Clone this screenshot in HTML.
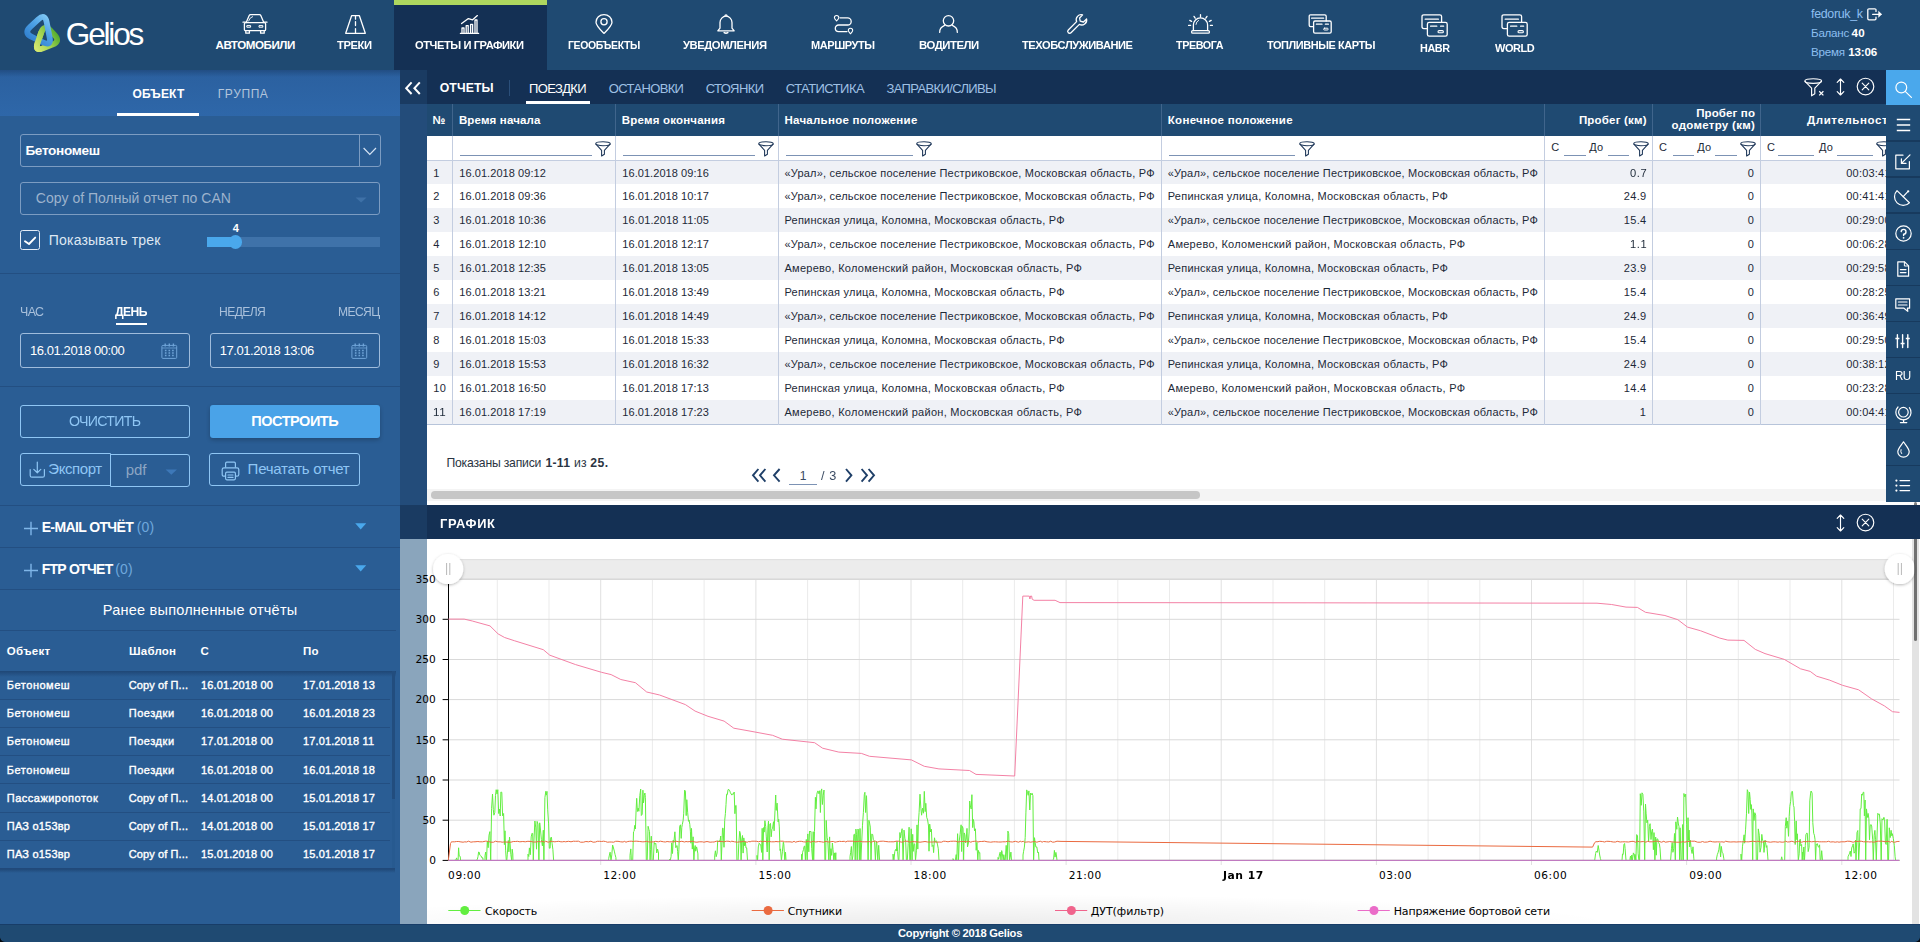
<!DOCTYPE html>
<html lang="ru">
<head>
<meta charset="utf-8">
<title>Gelios</title>
<style>
*{box-sizing:border-box;margin:0;padding:0}
html,body{width:1920px;height:942px;overflow:hidden;background:#1f4a72;font-family:"Liberation Sans",sans-serif;color:#fff}
body{position:relative}
.abs{position:absolute}
svg{display:block;overflow:visible}
.ic{fill:none;stroke:#fff;stroke-width:1.3;stroke-linecap:round;stroke-linejoin:round}
</style>
</head>
<body>
<!-- backgrounds -->
<div class="abs" style="left:0px;top:0px;width:1920px;height:70px;background:#1f4a72;"></div>
<div class="abs" style="left:394px;top:0px;width:153px;height:70px;background:#143054;border-top:5px solid #aed75f;"></div>
<div class="abs" style="left:0px;top:70px;width:400px;height:854px;background:#2a5d94;"></div>
<div class="abs" style="left:400px;top:70px;width:1486px;height:34.2px;background:#143054;"></div>
<div class="abs" style="left:400px;top:104px;width:27px;height:401px;background:#234c7a;"></div>
<div class="abs" style="left:427px;top:104px;width:1459px;height:401px;background:#fff;"></div>
<div class="abs" style="left:1886px;top:501.5px;width:34px;height:4px;background:#fff;"></div>
<div class="abs" style="left:400px;top:538.8px;width:27px;height:385.2px;background:#8aa5bc;"></div>
<!-- header -->
<svg class="abs" style="left:0;top:0" width="160" height="70" viewBox="0 0 160 70"><defs><linearGradient id="lgb" gradientUnits="userSpaceOnUse" x1="27" y1="42" x2="50" y2="16"><stop offset="0" stop-color="#2b7acb"/><stop offset=".55" stop-color="#4ea2e6"/><stop offset="1" stop-color="#86cdf6"/></linearGradient><linearGradient id="lgg" gradientUnits="userSpaceOnUse" x1="36" y1="48" x2="58" y2="34"><stop offset="0" stop-color="#d3e86e"/><stop offset=".5" stop-color="#9fd251"/><stop offset="1" stop-color="#52aa2e"/></linearGradient><clipPath id="cpg"><path d="M28 31 L45 31 L42 51 L46 56 L28 58 Z"/></clipPath></defs><path d="M41.24 32.50 L37.56 43.10 Q34.60 51.60 42.99 48.33 L52.41 44.67 Q60.80 41.40 54.59 34.89 L50.41 30.51 Q44.20 24.00 41.24 32.50 Z" fill="none" stroke="url(#lgg)" stroke-width="5.8"/><path d="M38.31 19.33 L30.19 26.87 Q23.60 33.00 31.71 36.91 L43.29 42.49 Q51.40 46.40 49.67 37.57 L46.63 22.03 Q44.90 13.20 38.31 19.33 Z" fill="none" stroke="url(#lgb)" stroke-width="5.8"/><path d="M41.24 32.50 L37.56 43.10 Q34.60 51.60 42.99 48.33 L52.41 44.67 Q60.80 41.40 54.59 34.89 L50.41 30.51 Q44.20 24.00 41.24 32.50 Z" fill="none" stroke="url(#lgg)" stroke-width="5.8" clip-path="url(#cpg)"/><text x="65.8" y="44.7" font-family="Liberation Sans, sans-serif" font-size="31.6" fill="#fff" letter-spacing="-2.2">Gelios</text></svg>

  <!-- car -->
  <svg class="abs" style="left:242px;top:14px" width="26" height="20" viewBox="0 0 26 20"><g class="ic">
    <path d="M4.2 8.6 L7.2 1.6 Q7.6 .7 8.6 .7 H17.4 Q18.4 .7 18.8 1.6 L21.8 8.6"/>
    <path d="M1 8.2 H3.6 M22.4 8.2 H25"/>
    <rect x="2.4" y="8.6" width="21.2" height="8" rx="1.2"/>
    <rect x="5.2" y="11.6" width="3.4" height="1.6" stroke-width="1"/><rect x="17.4" y="11.6" width="3.4" height="1.6" stroke-width="1"/>
    <path d="M3.8 16.6 V19.2 H7.4 V16.6 M18.6 16.6 V19.2 H22.2 V16.6"/>
    <path d="M6.6 7 Q7.8 3.2 10.6 2.6" stroke-width=".9"/>
  </g></svg>
  <!-- road -->
  <svg class="abs" style="left:345px;top:15px" width="21" height="19" viewBox="0 0 21 19"><g class="ic">
    <path d="M6.6 .7 H14.4 L20.3 18.3 H.7 Z"/>
    <path d="M10.5 1 V4.2 M10.5 6.6 V10.6 M10.5 13.6 V18"/>
  </g></svg>
  <!-- chart -->
  <svg class="abs" style="left:460px;top:15px" width="19" height="19" viewBox="0 0 19 19"><g class="ic" stroke-width="1.2">
    <path d="M.4 18.4 H18.6"/>
    <path d="M2 18 V13 H4 V18 M6.2 18 V10.6 H8.2 V18 M10.6 18 V9.4 H12.6 V18 M15 18 V5 H17 V18"/>
    <path d="M1.6 8.6 L8.4 3.6 L12.6 4.8 L17.4 .6"/>
  </g></svg>
  <!-- pin -->
  <svg class="abs" style="left:595px;top:14px" width="18" height="20" viewBox="0 0 18 20"><g class="ic">
    <path d="M9 19.4 C6 16.4 1 11.6 1 8.2 A8 7.6 0 0 1 17 8.2 C17 11.6 12 16.4 9 19.4 Z"/>
    <circle cx="9" cy="7.8" r="3.1"/>
  </g></svg>
  <!-- bell -->
  <svg class="abs" style="left:717px;top:14px" width="18" height="20" viewBox="0 0 18 20"><g class="ic">
    <path d="M.8 16.8 H17.2 L15 14.2 V8.6 A6 6.4 0 0 0 3 8.6 V14.2 Z"/>
    <path d="M8 1.8 A1 1 0 0 1 10 1.8"/>
    <path d="M7.2 18.6 Q9 19.8 10.8 18.6" stroke-width="1.6"/>
  </g></svg>
  <!-- routes -->
  <svg class="abs" style="left:834px;top:15px" width="19" height="19" viewBox="0 0 19 19"><g class="ic">
    <path d="M6 2.8 H13.6 A3.6 3.6 0 0 1 13.6 10 H4.6 A3.3 3.3 0 0 0 4.6 16.6 H13"/>
    <path d="M2.6 6 C1.1 4.4 .4 3.5 .4 2.7 A2.2 2.2 0 0 1 4.8 2.7 C4.8 3.5 4.1 4.4 2.6 6 Z" stroke-width="1.05"/>
    <path d="M16.5 18.8 C15 17.2 14.3 16.3 14.3 15.5 A2.2 2.2 0 0 1 18.7 15.5 C18.7 16.3 18 17.2 16.5 18.8 Z" stroke-width="1.05"/>
  </g></svg>
  <!-- driver -->
  <svg class="abs" style="left:939px;top:15px" width="19" height="18" viewBox="0 0 19 18"><g class="ic">
    <circle cx="9.5" cy="5.8" r="5.2"/>
    <path d="M.7 17.4 A9.2 7.6 0 0 1 5.6 10.4 M13.4 10.4 A9.2 7.6 0 0 1 18.3 17.4"/>
  </g></svg>
  <!-- wrench -->
  <svg class="abs" style="left:1067px;top:14px" width="21" height="20" viewBox="0 0 21 20"><g class="ic">
    <path d="M15.6 .9 A5 5 0 0 0 9.6 7.6 L1.3 16 A1.9 1.9 0 0 0 4 18.7 L12.4 10.4 A5 5 0 0 0 19.6 5 L16.4 8 L13.2 7.2 L12.6 4 Z"/>
  </g></svg>
  <!-- alarm -->
  <svg class="abs" style="left:1188px;top:14px" width="25" height="20" viewBox="0 0 25 20"><g class="ic">
    <path d="M5.4 16.6 V11 A7.1 7.1 0 0 1 19.6 11 V16.6"/>
    <rect x="3.6" y="16.6" width="17.8" height="2.6" rx="1.2"/>
    <path d="M8 10.4 A4.6 4.6 0 0 1 10.6 6.4" stroke-width=".9"/>
    <path d="M12.5 .6 V3 M6 2.4 L7.2 4.2 M19 2.4 L17.8 4.2 M1.8 6.4 L3.6 7.4 M23.2 6.4 L21.4 7.4 M.6 11.4 H2.6 M22.4 11.4 H24.4"/>
  </g></svg>
  <!-- cards -->
  <svg class="abs" style="left:1308px;top:14px" width="24" height="20" viewBox="0 0 24 20"><g class="ic">
    <path d="M5.4 12.6 H2.6 Q1.2 12.6 1.2 11.2 V2.2 Q1.2 .8 2.6 .8 H16.8 Q18.2 .8 18.2 2.2 V7"/>
    <rect x="5.6" y="7" width="17.6" height="12.2" rx="1.4"/>
    <path d="M3.6 4.2 H15.6 M8.4 10.2 H14 M17.4 10.2 H20.4"/>
    <rect x="15.6" y="14.2" width="4.6" height="1.8" rx=".9" stroke-width="1"/>
  </g></svg>
  <svg class="abs" style="left:1421px;top:14px" width="27" height="23" viewBox="0 0 27 23"><g class="ic" stroke-width="1.4">
    <path d="M6 14.6 H2.8 Q1 14.6 1 12.8 V2.6 Q1 .8 2.8 .8 H18.8 Q20.6 .8 20.6 2.6 V8.4"/>
    <rect x="6.4" y="8.4" width="19.8" height="13.8" rx="1.8"/>
    <path d="M4.2 5.2 H17.4 M9.6 12.2 H15.8 M19.6 12.2 H22.6"/>
    <rect x="17" y="16.6" width="5.4" height="2.2" rx="1.1" stroke-width="1.1"/>
  </g></svg>
  <svg class="abs" style="left:1501px;top:14px" width="27" height="23" viewBox="0 0 27 23"><g class="ic" stroke-width="1.4">
    <path d="M6 14.6 H2.8 Q1 14.6 1 12.8 V2.6 Q1 .8 2.8 .8 H18.8 Q20.6 .8 20.6 2.6 V8.4"/>
    <rect x="6.4" y="8.4" width="19.8" height="13.8" rx="1.8"/>
    <path d="M4.2 5.2 H17.4 M9.6 12.2 H15.8 M19.6 12.2 H22.6"/>
    <rect x="17" y="16.6" width="5.4" height="2.2" rx="1.1" stroke-width="1.1"/>
  </g></svg>

  <span style="position:absolute;left:215.48px;top:39.18px;font-size:11.6px;line-height:11.6px;white-space:nowrap;color:#fff;font-weight:700;letter-spacing:-0.45px;">АВТОМОБИЛИ</span>
<span style="position:absolute;left:337.48px;top:39.18px;font-size:11.6px;line-height:11.6px;white-space:nowrap;color:#fff;font-weight:700;letter-spacing:-0.45px;transform:scaleX(0.9680);transform-origin:0 0;">ТРЕКИ</span>
<span style="position:absolute;left:415.48px;top:39.18px;font-size:11.6px;line-height:11.6px;white-space:nowrap;color:#fff;font-weight:700;letter-spacing:-0.45px;transform:scaleX(0.9608);transform-origin:0 0;">ОТЧЕТЫ И ГРАФИКИ</span>
<span style="position:absolute;left:568.23px;top:39.18px;font-size:11.6px;line-height:11.6px;white-space:nowrap;color:#fff;font-weight:700;letter-spacing:-0.45px;transform:scaleX(0.9046);transform-origin:0 0;">ГЕООБЪЕКТЫ</span>
<span style="position:absolute;left:683.48px;top:39.18px;font-size:11.6px;line-height:11.6px;white-space:nowrap;color:#fff;font-weight:700;letter-spacing:-0.45px;transform:scaleX(0.9693);transform-origin:0 0;">УВЕДОМЛЕНИЯ</span>
<span style="position:absolute;left:811.48px;top:39.18px;font-size:11.6px;line-height:11.6px;white-space:nowrap;color:#fff;font-weight:700;letter-spacing:-0.45px;transform:scaleX(0.9481);transform-origin:0 0;">МАРШРУТЫ</span>
<span style="position:absolute;left:919.23px;top:39.18px;font-size:11.6px;line-height:11.6px;white-space:nowrap;color:#fff;font-weight:700;letter-spacing:-0.45px;transform:scaleX(0.9772);transform-origin:0 0;">ВОДИТЕЛИ</span>
<span style="position:absolute;left:1022.48px;top:39.18px;font-size:11.6px;line-height:11.6px;white-space:nowrap;color:#fff;font-weight:700;letter-spacing:-0.45px;transform:scaleX(0.9569);transform-origin:0 0;">ТЕХОБСЛУЖИВАНИЕ</span>
<span style="position:absolute;left:1176.48px;top:39.18px;font-size:11.6px;line-height:11.6px;white-space:nowrap;color:#fff;font-weight:700;letter-spacing:-0.45px;transform:scaleX(0.9276);transform-origin:0 0;">ТРЕВОГА</span>
<span style="position:absolute;left:1266.98px;top:39.18px;font-size:11.6px;line-height:11.6px;white-space:nowrap;color:#fff;font-weight:700;letter-spacing:-0.45px;transform:scaleX(0.9448);transform-origin:0 0;">ТОПЛИВНЫЕ КАРТЫ</span>
<span style="position:absolute;left:1420.48px;top:42.18px;font-size:11.6px;line-height:11.6px;white-space:nowrap;color:#fff;font-weight:700;letter-spacing:-0.45px;transform:scaleX(0.9323);transform-origin:0 0;">HABR</span>
<span style="position:absolute;left:1495.08px;top:42.18px;font-size:11.6px;line-height:11.6px;white-space:nowrap;color:#fff;font-weight:700;letter-spacing:-0.45px;transform:scaleX(0.9474);transform-origin:0 0;">WORLD</span>
<span style="position:absolute;left:1811.04px;top:8.10px;font-size:12.4px;line-height:12.4px;white-space:nowrap;color:#8dbff0;letter-spacing:-0.30px;">fedoruk_k</span><span style="position:absolute;left:1811.08px;top:26.98px;font-size:11.6px;line-height:11.6px;white-space:nowrap;color:#8dbff0;letter-spacing:-0.26px;">Баланс</span><span style="position:absolute;left:1851.48px;top:26.98px;font-size:11.6px;line-height:11.6px;white-space:nowrap;color:#fff;font-weight:700;letter-spacing:0.44px;">40</span><span style="position:absolute;left:1811.08px;top:45.88px;font-size:11.6px;line-height:11.6px;white-space:nowrap;color:#8dbff0;letter-spacing:-0.24px;">Время</span><span style="position:absolute;left:1848.18px;top:45.88px;font-size:11.6px;line-height:11.6px;white-space:nowrap;color:#fff;font-weight:700;letter-spacing:-0.18px;">13:06</span><svg class="abs" style="left:1867px;top:8px" width="16" height="13" viewBox="0 0 16 13"><g class="ic" stroke-width="1.4">
    <path d="M9 3.4 V2 Q9 .8 7.8 .8 H2 Q.8 .8 .8 2 V10.6 Q.8 11.8 2 11.8 H7.8 Q9 11.8 9 10.6 V9.2"/>
    <path d="M5.6 6.3 H14"/><path d="M11.8 3.6 L14.6 6.3 L11.8 9 Z" fill="#fff" stroke-width=".6"/>
  </g></svg><!-- left panel -->
<div class="abs" style="left:0px;top:70px;width:400px;height:45.5px;background:linear-gradient(#2b609f,#2e67a9);"></div>
<div class="abs" style="left:0px;top:70px;width:400px;height:7px;background:linear-gradient(rgba(10,30,60,.28),rgba(10,30,60,0));"></div>
<span style="position:absolute;left:132.46px;top:87.54px;font-size:12px;line-height:12px;white-space:nowrap;color:#fff;font-weight:700;letter-spacing:0.18px;">ОБЪЕКТ</span><span style="position:absolute;left:217.76px;top:87.54px;font-size:12px;line-height:12px;white-space:nowrap;color:#b3c5db;letter-spacing:0.60px;">ГРУППА</span><div class="abs" style="left:117px;top:113.4px;width:82px;height:2.5px;background:#fff;"></div>
<div class="abs" style="left:20px;top:134.4px;width:360.6px;height:32.2px;border:1px solid #7c9cc2;border-radius:3px;"></div>
<div class="abs" style="left:359px;top:135px;width:1px;height:31px;background:#7c9cc2;"></div>
<svg class="abs" style="left:362px;top:146px" width="16" height="11" viewBox="0 0 16 11"><path d="M1.6 2 L7.8 8.4 L14 2" fill="none" stroke="#d5e3f3" stroke-width="1.2"/></svg>
<span style="position:absolute;left:25.39px;top:144.29px;font-size:13.6px;line-height:13.6px;white-space:nowrap;color:#fff;font-weight:700;letter-spacing:-0.32px;">Бетономеш</span><div class="abs" style="left:20px;top:182.4px;width:359.8px;height:32.2px;border:1px solid #7c9cc2;border-radius:3px;"></div>
<span style="position:absolute;left:35.87px;top:191.05px;font-size:14px;line-height:14px;white-space:nowrap;color:#9db3cd;">Copy of Полный отчет по CAN</span><svg class="abs" style="left:355px;top:197px" width="12" height="6" viewBox="0 0 12 6"><path d="M.6 .4 H11.6 L6.1 5.6 Z" fill="#3e71a7"/></svg>
<div class="abs" style="left:20px;top:230.3px;width:19.6px;height:19.4px;border:1px solid #e3ecf7;border-radius:2.5px;"></div>
<svg class="abs" style="left:20px;top:230px" width="20" height="20" viewBox="0 0 20 20"><path d="M5 11.2 L9 14 L15.2 7.6" fill="none" stroke="#fff" stroke-width="1.9" stroke-linecap="round" stroke-linejoin="round"/></svg>
<span style="position:absolute;left:48.77px;top:232.75px;font-size:14px;line-height:14px;white-space:nowrap;color:#dfe8f3;letter-spacing:0.20px;">Показывать трек</span><span style="position:absolute;left:232.81px;top:222.69px;font-size:11px;line-height:11px;white-space:nowrap;color:#fff;font-weight:700;">4</span><div class="abs" style="left:207px;top:237px;width:173px;height:9.6px;background:#3f72a9;"></div>
<div class="abs" style="left:207px;top:237px;width:29px;height:9.6px;background:#4aa8ec;"></div>
<div class="abs" style="left:228.7px;top:235.3px;width:13.4px;height:13.4px;background:#4aa8ec;border-radius:50%;"></div>
<div class="abs" style="left:0px;top:272.5px;width:400px;height:1.6px;background:#234f82;"></div>
<span style="position:absolute;left:19.63px;top:305.53px;font-size:12.6px;line-height:12.6px;white-space:nowrap;color:#a9c0db;letter-spacing:-0.63px;transform:scaleX(0.9858);transform-origin:0 0;">ЧАС</span><span style="position:absolute;left:115.03px;top:305.53px;font-size:12.6px;line-height:12.6px;white-space:nowrap;color:#fff;font-weight:700;letter-spacing:-0.63px;transform:scaleX(0.9659);transform-origin:0 0;">ДЕНЬ</span><span style="position:absolute;left:219.23px;top:305.53px;font-size:12.6px;line-height:12.6px;white-space:nowrap;color:#a9c0db;letter-spacing:-0.63px;transform:scaleX(0.9639);transform-origin:0 0;">НЕДЕЛЯ</span><span style="position:absolute;left:337.93px;top:305.53px;font-size:12.6px;line-height:12.6px;white-space:nowrap;color:#a9c0db;letter-spacing:-0.63px;transform:scaleX(0.9614);transform-origin:0 0;">МЕСЯЦ</span><div class="abs" style="left:116px;top:322.8px;width:31px;height:2.2px;background:#fff;"></div>
<div class="abs" style="left:20px;top:333.2px;width:169.6px;height:34.6px;border:1px solid #9fbcdc;border-radius:3px;"></div>
<div class="abs" style="left:210px;top:333.2px;width:169.8px;height:34.6px;border:1px solid #9fbcdc;border-radius:3px;"></div>
<span style="position:absolute;left:30.02px;top:344.10px;font-size:13px;line-height:13px;white-space:nowrap;color:#fff;letter-spacing:-0.43px;">16.01.2018 00:00</span><span style="position:absolute;left:219.81px;top:344.10px;font-size:13px;line-height:13px;white-space:nowrap;color:#fff;letter-spacing:-0.45px;">17.01.2018 13:06</span><svg class="abs" style="left:161.0px;top:343px" width="17" height="16" viewBox="0 0 17 16"><g fill="none" stroke="#6fa4d8" stroke-width="1">
<rect x=".9" y="2.4" width="14.8" height="13" rx="1"/><path d="M1 5 H15.6" stroke-width=".8"/><path d="M4.2 .6 V3.4 M8.3 .6 V3.4 M12.4 .6 V3.4" stroke-width="1.4"/>
<path d="M3.9 7.4 h1.6 M7.5 7.4 h1.6 M11.1 7.4 h1.6 M3.9 10 h1.6 M7.5 10 h1.6 M11.1 10 h1.6 M3.9 12.6 h1.6 M7.5 12.6 h1.6 M11.1 12.6 h1.6" stroke-width="1.5"/></g></svg>
<svg class="abs" style="left:351.20000000000005px;top:343px" width="17" height="16" viewBox="0 0 17 16"><g fill="none" stroke="#6fa4d8" stroke-width="1">
<rect x=".9" y="2.4" width="14.8" height="13" rx="1"/><path d="M1 5 H15.6" stroke-width=".8"/><path d="M4.2 .6 V3.4 M8.3 .6 V3.4 M12.4 .6 V3.4" stroke-width="1.4"/>
<path d="M3.9 7.4 h1.6 M7.5 7.4 h1.6 M11.1 7.4 h1.6 M3.9 10 h1.6 M7.5 10 h1.6 M11.1 10 h1.6 M3.9 12.6 h1.6 M7.5 12.6 h1.6 M11.1 12.6 h1.6" stroke-width="1.5"/></g></svg>
<div class="abs" style="left:0px;top:385.6px;width:400px;height:1.6px;background:#234f82;"></div>
<div class="abs" style="left:20px;top:405.2px;width:169.6px;height:32.4px;border:1px solid #8fc6f4;border-radius:3px;"></div>
<span style="position:absolute;left:68.75px;top:413.73px;font-size:14.5px;line-height:14.5px;white-space:nowrap;color:#8fc6f4;letter-spacing:-0.73px;transform:scaleX(0.9789);transform-origin:0 0;">ОЧИСТИТЬ</span><div class="abs" style="left:210px;top:405.2px;width:169.8px;height:32.4px;background:#4aa3e8;border-radius:3px;box-shadow:0 2px 4px rgba(0,0,0,.22);"></div>
<span style="position:absolute;left:251.35px;top:413.73px;font-size:14.5px;line-height:14.5px;white-space:nowrap;color:#fff;font-weight:700;letter-spacing:-0.48px;">ПОСТРОИТЬ</span><div class="abs" style="left:20px;top:453.1px;width:90.6px;height:32.8px;border:1px solid #8fc6f4;border-radius:3px 0 0 3px;"></div>
<svg class="abs" style="left:29px;top:461px" width="17" height="18" viewBox="0 0 17 18"><g fill="none" stroke="#8fc6f4" stroke-width="1.2" stroke-linecap="round" stroke-linejoin="round"><path d="M1.2 8.6 V14.4 Q1.2 16.2 3 16.2 H13.6 Q15.4 16.2 15.4 14.4 V8.6"/><path d="M8.3 1 V11.6 M4.8 8.4 L8.3 11.8 L11.8 8.4"/></g></svg>
<span style="position:absolute;left:48.33px;top:461.30px;font-size:15px;line-height:15px;white-space:nowrap;color:#8fc6f4;letter-spacing:-0.42px;">Экспорт</span><div class="abs" style="left:110px;top:454.3px;width:79.6px;height:32.8px;border:1px solid #8fc6f4;border-radius:0 3px 3px 0;"></div>
<span style="position:absolute;left:125.83px;top:461.90px;font-size:15px;line-height:15px;white-space:nowrap;color:#8da6c3;letter-spacing:-0.10px;">pdf</span><svg class="abs" style="left:165px;top:468.6px" width="13" height="7" viewBox="0 0 13 7"><path d="M.6 .4 H12 L6.3 5.8 Z" fill="#3d78b8"/></svg>
<div class="abs" style="left:209px;top:453.1px;width:151px;height:32.8px;border:1px solid #8fc6f4;border-radius:3px;"></div>
<svg class="abs" style="left:221.4px;top:460.6px" width="19" height="20" viewBox="0 0 19 20"><g fill="none" stroke="#8fc6f4" stroke-width="1.2" stroke-linejoin="round"><path d="M4.6 6.6 V2.4 Q4.6 1.2 5.8 1.2 H13.2 Q14.4 1.2 14.4 2.4 V6.6"/><path d="M4.6 15.2 H3 Q1.2 15.2 1.2 13.4 V8.6 Q1.2 6.8 3 6.8 H16 Q17.8 6.8 17.8 8.6 V13.4 Q17.8 15.2 16 15.2 H14.4"/><rect x="4.6" y="11.2" width="9.8" height="7.6" rx="1.2"/><path d="M7 14 H12 M7 16.4 H12" stroke-linecap="round"/></g></svg>
<span style="position:absolute;left:247.62px;top:461.30px;font-size:15px;line-height:15px;white-space:nowrap;color:#8fc6f4;letter-spacing:-0.26px;">Печатать отчет</span><div class="abs" style="left:0px;top:505px;width:400px;height:1.4px;background:#234f82;"></div>
<svg class="abs" style="left:23px;top:520.8px" width="16" height="15" viewBox="0 0 16 15"><path d="M1 7.5 H15 M8 .8 V14.2" fill="none" stroke="#7fb6e8" stroke-width="1.4"/></svg>
<span style="position:absolute;left:41.67px;top:519.85px;font-size:14px;line-height:14px;white-space:nowrap;color:#fff;font-weight:700;letter-spacing:-0.62px;">E-MAIL ОТЧЁТ</span><span style="position:absolute;left:136.87px;top:519.85px;font-size:14px;line-height:14px;white-space:nowrap;color:#6fa8dc;letter-spacing:0.07px;">(0)</span><svg class="abs" style="left:355px;top:522.6px" width="12" height="7" viewBox="0 0 12 7"><path d="M.2 .3 H11.2 L5.7 6.6 Z" fill="#4aa8ec"/></svg>
<svg class="abs" style="left:23px;top:562.6999999999999px" width="16" height="15" viewBox="0 0 16 15"><path d="M1 7.5 H15 M8 .8 V14.2" fill="none" stroke="#7fb6e8" stroke-width="1.4"/></svg>
<span style="position:absolute;left:41.67px;top:561.75px;font-size:14px;line-height:14px;white-space:nowrap;color:#fff;font-weight:700;letter-spacing:-0.70px;">FTP ОТЧЕТ</span><span style="position:absolute;left:115.37px;top:561.75px;font-size:14px;line-height:14px;white-space:nowrap;color:#6fa8dc;letter-spacing:0.07px;">(0)</span><svg class="abs" style="left:355px;top:564.5px" width="12" height="7" viewBox="0 0 12 7"><path d="M.2 .3 H11.2 L5.7 6.6 Z" fill="#4aa8ec"/></svg>
<div class="abs" style="left:0px;top:547px;width:400px;height:1.4px;background:#234f82;"></div>
<div class="abs" style="left:0px;top:588.8px;width:400px;height:1.4px;background:#234f82;"></div>
<span style="position:absolute;left:102.85px;top:602.73px;font-size:14.5px;line-height:14.5px;white-space:nowrap;color:#fff;letter-spacing:0.22px;">Ранее выполненные отчёты</span><div class="abs" style="left:0px;top:629.6px;width:396px;height:1.3px;background:#234f82;"></div>
<span style="position:absolute;left:6.78px;top:646.07px;font-size:11.5px;line-height:11.5px;white-space:nowrap;color:#fff;font-weight:700;letter-spacing:0.25px;">Объект</span><span style="position:absolute;left:129.08px;top:646.07px;font-size:11.5px;line-height:11.5px;white-space:nowrap;color:#fff;font-weight:700;letter-spacing:0.19px;">Шаблон</span><span style="position:absolute;left:200.48px;top:646.07px;font-size:11.5px;line-height:11.5px;white-space:nowrap;color:#fff;font-weight:700;">С</span><span style="position:absolute;left:302.98px;top:646.07px;font-size:11.5px;line-height:11.5px;white-space:nowrap;color:#fff;font-weight:700;letter-spacing:0.24px;">По</span><div class="abs" style="left:0px;top:671px;width:396px;height:6px;background:linear-gradient(rgba(8,25,55,.32),rgba(8,25,55,0));"></div>
<span style="position:absolute;left:6.80px;top:680.09px;font-size:11px;line-height:11px;white-space:nowrap;color:#fff;letter-spacing:0.52px;-webkit-text-stroke:.38px #fff;">Бетономеш</span><span style="position:absolute;left:128.70px;top:680.09px;font-size:11px;line-height:11px;white-space:nowrap;color:#fff;letter-spacing:0.11px;-webkit-text-stroke:.38px #fff;">Copy of П...</span><span style="position:absolute;left:201.00px;top:680.09px;font-size:11px;line-height:11px;white-space:nowrap;color:#fff;letter-spacing:0.12px;-webkit-text-stroke:.38px #fff;">16.01.2018 00</span><span style="position:absolute;left:303.00px;top:680.09px;font-size:11px;line-height:11px;white-space:nowrap;color:#fff;letter-spacing:0.13px;-webkit-text-stroke:.38px #fff;">17.01.2018 13</span><div class="abs" style="left:0px;top:698.9px;width:390px;height:1.2px;background:#234f82;"></div>
<span style="position:absolute;left:6.80px;top:708.23px;font-size:11px;line-height:11px;white-space:nowrap;color:#fff;letter-spacing:0.52px;-webkit-text-stroke:.38px #fff;">Бетономеш</span><span style="position:absolute;left:128.70px;top:708.23px;font-size:11px;line-height:11px;white-space:nowrap;color:#fff;letter-spacing:0.55px;-webkit-text-stroke:.38px #fff;">Поездки</span><span style="position:absolute;left:201.00px;top:708.23px;font-size:11px;line-height:11px;white-space:nowrap;color:#fff;letter-spacing:0.12px;-webkit-text-stroke:.38px #fff;">16.01.2018 00</span><span style="position:absolute;left:303.00px;top:708.23px;font-size:11px;line-height:11px;white-space:nowrap;color:#fff;letter-spacing:0.13px;-webkit-text-stroke:.38px #fff;">16.01.2018 23</span><div class="abs" style="left:0px;top:727.0px;width:390px;height:1.2px;background:#234f82;"></div>
<span style="position:absolute;left:6.80px;top:736.37px;font-size:11px;line-height:11px;white-space:nowrap;color:#fff;letter-spacing:0.52px;-webkit-text-stroke:.38px #fff;">Бетономеш</span><span style="position:absolute;left:128.70px;top:736.37px;font-size:11px;line-height:11px;white-space:nowrap;color:#fff;letter-spacing:0.55px;-webkit-text-stroke:.38px #fff;">Поездки</span><span style="position:absolute;left:201.00px;top:736.37px;font-size:11px;line-height:11px;white-space:nowrap;color:#fff;letter-spacing:0.12px;-webkit-text-stroke:.38px #fff;">17.01.2018 00</span><span style="position:absolute;left:303.00px;top:736.37px;font-size:11px;line-height:11px;white-space:nowrap;color:#fff;letter-spacing:0.13px;-webkit-text-stroke:.38px #fff;">17.01.2018 11</span><div class="abs" style="left:0px;top:755.2px;width:390px;height:1.2px;background:#234f82;"></div>
<span style="position:absolute;left:6.80px;top:764.51px;font-size:11px;line-height:11px;white-space:nowrap;color:#fff;letter-spacing:0.52px;-webkit-text-stroke:.38px #fff;">Бетономеш</span><span style="position:absolute;left:128.70px;top:764.51px;font-size:11px;line-height:11px;white-space:nowrap;color:#fff;letter-spacing:0.55px;-webkit-text-stroke:.38px #fff;">Поездки</span><span style="position:absolute;left:201.00px;top:764.51px;font-size:11px;line-height:11px;white-space:nowrap;color:#fff;letter-spacing:0.12px;-webkit-text-stroke:.38px #fff;">16.01.2018 00</span><span style="position:absolute;left:303.00px;top:764.51px;font-size:11px;line-height:11px;white-space:nowrap;color:#fff;letter-spacing:0.13px;-webkit-text-stroke:.38px #fff;">16.01.2018 18</span><div class="abs" style="left:0px;top:783.3px;width:390px;height:1.2px;background:#234f82;"></div>
<span style="position:absolute;left:6.80px;top:792.65px;font-size:11px;line-height:11px;white-space:nowrap;color:#fff;letter-spacing:0.49px;-webkit-text-stroke:.38px #fff;">Пассажиропоток</span><span style="position:absolute;left:128.70px;top:792.65px;font-size:11px;line-height:11px;white-space:nowrap;color:#fff;letter-spacing:0.11px;-webkit-text-stroke:.38px #fff;">Copy of П...</span><span style="position:absolute;left:201.00px;top:792.65px;font-size:11px;line-height:11px;white-space:nowrap;color:#fff;letter-spacing:0.12px;-webkit-text-stroke:.38px #fff;">14.01.2018 00</span><span style="position:absolute;left:303.00px;top:792.65px;font-size:11px;line-height:11px;white-space:nowrap;color:#fff;letter-spacing:0.13px;-webkit-text-stroke:.38px #fff;">15.01.2018 17</span><div class="abs" style="left:0px;top:811.5px;width:390px;height:1.2px;background:#234f82;"></div>
<span style="position:absolute;left:6.80px;top:820.79px;font-size:11px;line-height:11px;white-space:nowrap;color:#fff;letter-spacing:0.21px;-webkit-text-stroke:.38px #fff;">ПАЗ о153вр</span><span style="position:absolute;left:128.70px;top:820.79px;font-size:11px;line-height:11px;white-space:nowrap;color:#fff;letter-spacing:0.11px;-webkit-text-stroke:.38px #fff;">Copy of П...</span><span style="position:absolute;left:201.00px;top:820.79px;font-size:11px;line-height:11px;white-space:nowrap;color:#fff;letter-spacing:0.12px;-webkit-text-stroke:.38px #fff;">14.01.2018 00</span><span style="position:absolute;left:303.00px;top:820.79px;font-size:11px;line-height:11px;white-space:nowrap;color:#fff;letter-spacing:0.13px;-webkit-text-stroke:.38px #fff;">15.01.2018 17</span><div class="abs" style="left:0px;top:839.6px;width:390px;height:1.2px;background:#234f82;"></div>
<span style="position:absolute;left:6.80px;top:848.93px;font-size:11px;line-height:11px;white-space:nowrap;color:#fff;letter-spacing:0.21px;-webkit-text-stroke:.38px #fff;">ПАЗ о153вр</span><span style="position:absolute;left:128.70px;top:848.93px;font-size:11px;line-height:11px;white-space:nowrap;color:#fff;letter-spacing:0.11px;-webkit-text-stroke:.38px #fff;">Copy of П...</span><span style="position:absolute;left:201.00px;top:848.93px;font-size:11px;line-height:11px;white-space:nowrap;color:#fff;letter-spacing:0.12px;-webkit-text-stroke:.38px #fff;">15.01.2018 00</span><span style="position:absolute;left:303.00px;top:848.93px;font-size:11px;line-height:11px;white-space:nowrap;color:#fff;letter-spacing:0.13px;-webkit-text-stroke:.38px #fff;">15.01.2018 17</span><div class="abs" style="left:0px;top:867.6px;width:395.4px;height:1.8px;background:#21497a;"></div>
<div class="abs" style="left:0px;top:869.4px;width:395.4px;height:3.4px;background:linear-gradient(rgba(8,25,55,.30),rgba(8,25,55,0));"></div>
<div class="abs" style="left:392px;top:671px;width:3.4px;height:197px;background:#275a90;"></div>
<div class="abs" style="left:392px;top:671px;width:3.4px;height:128px;background:#224d7e;"></div>
<!-- chart -->
<div class="abs" style="left:427px;top:538.8px;width:1493px;height:385.2px;background:#fff;"></div>
<div class="abs" style="left:427px;top:894px;width:1485px;height:30px;background:radial-gradient(ellipse 660px 30px at 533px 30px,rgba(0,0,0,.075),rgba(0,0,0,0));"></div>
<div class="abs" style="left:1912px;top:538.8px;width:7px;height:385.2px;background:#e3e3e3;"></div>
<svg class="abs" style="left:0;top:0" width="1920" height="942" viewBox="0 0 1920 942"><rect x="448.3" y="559.6" width="1451.2" height="19.6" fill="#ececec"/><path d="M448.3 559.6 H1899.5" stroke="#dedede" stroke-width="1"/><path d="M448.3 579.3 H1899.5" stroke="#cfcfcf" stroke-width="1"/><path d="M497.3 579.8 V860.4" stroke="#ebebeb" stroke-width="1"/><path d="M549.0 579.8 V860.4" stroke="#ebebeb" stroke-width="1"/><path d="M600.7 579.8 V865.0" stroke="#e0e0e0" stroke-width="1"/><path d="M652.4 579.8 V860.4" stroke="#ebebeb" stroke-width="1"/><path d="M704.1 579.8 V860.4" stroke="#ebebeb" stroke-width="1"/><path d="M755.9 579.8 V865.0" stroke="#e0e0e0" stroke-width="1"/><path d="M807.6 579.8 V860.4" stroke="#ebebeb" stroke-width="1"/><path d="M859.3 579.8 V860.4" stroke="#ebebeb" stroke-width="1"/><path d="M911.0 579.8 V865.0" stroke="#e0e0e0" stroke-width="1"/><path d="M962.7 579.8 V860.4" stroke="#ebebeb" stroke-width="1"/><path d="M1014.4 579.8 V860.4" stroke="#ebebeb" stroke-width="1"/><path d="M1066.1 579.8 V865.0" stroke="#e0e0e0" stroke-width="1"/><path d="M1117.8 579.8 V860.4" stroke="#ebebeb" stroke-width="1"/><path d="M1169.5 579.8 V860.4" stroke="#ebebeb" stroke-width="1"/><path d="M1221.2 579.8 V865.0" stroke="#e0e0e0" stroke-width="1"/><path d="M1273.0 579.8 V860.4" stroke="#ebebeb" stroke-width="1"/><path d="M1324.7 579.8 V860.4" stroke="#ebebeb" stroke-width="1"/><path d="M1376.4 579.8 V865.0" stroke="#e0e0e0" stroke-width="1"/><path d="M1428.1 579.8 V860.4" stroke="#ebebeb" stroke-width="1"/><path d="M1479.8 579.8 V860.4" stroke="#ebebeb" stroke-width="1"/><path d="M1531.5 579.8 V865.0" stroke="#e0e0e0" stroke-width="1"/><path d="M1583.2 579.8 V860.4" stroke="#ebebeb" stroke-width="1"/><path d="M1634.9 579.8 V860.4" stroke="#ebebeb" stroke-width="1"/><path d="M1686.6 579.8 V865.0" stroke="#e0e0e0" stroke-width="1"/><path d="M1738.3 579.8 V860.4" stroke="#ebebeb" stroke-width="1"/><path d="M1790.0 579.8 V860.4" stroke="#ebebeb" stroke-width="1"/><path d="M1841.8 579.8 V865.0" stroke="#e0e0e0" stroke-width="1"/><path d="M1893.5 579.8 V860.4" stroke="#ebebeb" stroke-width="1"/><path d="M448.3 820.2 H1899.5" stroke="#d9d9d9" stroke-width="1"/><path d="M448.3 780.0 H1899.5" stroke="#d9d9d9" stroke-width="1"/><path d="M448.3 739.8 H1899.5" stroke="#d9d9d9" stroke-width="1"/><path d="M448.3 699.6 H1899.5" stroke="#d9d9d9" stroke-width="1"/><path d="M448.3 659.5 H1899.5" stroke="#d9d9d9" stroke-width="1"/><path d="M448.3 619.3 H1899.5" stroke="#d9d9d9" stroke-width="1"/><path d="M448.3 579.1 H1899.5" stroke="#d9d9d9" stroke-width="1"/><path d="M442.6 860.4 H448.3" stroke="#000" stroke-width="1"/><path d="M442.6 820.2 H448.3" stroke="#000" stroke-width="1"/><path d="M442.6 780.0 H448.3" stroke="#000" stroke-width="1"/><path d="M442.6 739.8 H448.3" stroke="#000" stroke-width="1"/><path d="M442.6 699.6 H448.3" stroke="#000" stroke-width="1"/><path d="M442.6 659.5 H448.3" stroke="#000" stroke-width="1"/><path d="M442.6 619.3 H448.3" stroke="#000" stroke-width="1"/><path d="M442.6 579.1 H448.3" stroke="#000" stroke-width="1"/><path d="M448.5 579.3 V860.9" stroke="#000" stroke-width="1"/><path d="M448.3 860.4 L454.7 860.4 L455.0 860.4 L455.0 859.8 L455.8 860.4 L456.6 857.9 L457.3 860.4 L458.1 860.4 L458.6 847.8 L459.2 855.9 L460.2 856.4 L460.6 860.4 L476.2 860.4 L476.5 860.4 L476.5 860.4 L477.4 859.0 L478.0 856.5 L478.6 852.0 L479.3 852.3 L479.8 855.1 L480.6 855.8 L481.3 856.2 L482.1 858.1 L482.9 857.8 L483.0 860.4 L484.7 860.4 L485.0 860.4 L485.0 855.7 L485.7 852.0 L486.5 860.4 L487.3 841.4 L488.2 847.7 L489.0 835.2 L489.9 831.6 L490.7 860.4 L491.6 808.3 L492.5 794.1 L493.3 809.4 L493.9 815.2 L494.8 812.5 L495.5 795.4 L496.2 789.7 L497.1 794.0 L497.8 789.7 L498.7 813.5 L499.4 809.1 L500.2 816.0 L500.9 792.0 L501.8 792.3 L502.6 815.8 L503.6 813.5 L504.4 844.6 L505.0 830.8 L505.6 850.2 L506.3 860.4 L506.8 860.4 L507.3 854.2 L508.3 840.5 L508.9 851.8 L509.5 837.1 L510.2 845.0 L510.8 854.4 L511.7 860.4 L512.2 849.2 L512.8 853.9 L513.0 860.4 L527.7 860.4 L528.0 860.4 L528.0 854.2 L528.8 856.5 L529.4 847.9 L530.3 854.7 L531.2 836.9 L532.1 833.1 L532.7 833.6 L533.3 860.4 L533.9 841.3 L534.9 821.0 L535.8 827.9 L536.5 849.2 L537.1 821.4 L538.0 824.4 L538.9 860.4 L539.7 822.8 L540.5 830.1 L541.4 839.5 L542.4 845.9 L543.3 830.2 L543.9 860.4 L544.9 797.6 L545.8 791.3 L546.4 795.1 L547.0 791.4 L547.7 809.8 L548.6 823.9 L549.3 848.2 L550.1 848.2 L550.7 837.8 L551.4 837.1 L552.1 843.5 L552.9 849.6 L553.6 860.4 L554.0 860.4 L608.4 860.4 L608.7 860.4 L608.7 858.6 L609.4 855.1 L610.1 852.2 L611.0 860.4 L611.8 854.9 L612.6 845.0 L613.5 848.0 L614.3 851.1 L615.1 854.6 L615.9 857.7 L616.0 860.4 L629.7 860.4 L630.0 860.4 L630.0 855.4 L630.8 848.9 L631.4 860.4 L632.1 860.4 L632.7 860.4 L633.5 831.8 L634.1 831.3 L634.7 825.4 L635.4 829.0 L636.1 810.1 L636.7 798.3 L637.4 811.5 L638.2 808.1 L638.9 811.3 L639.8 795.6 L640.7 789.1 L641.3 815.5 L642.2 814.2 L642.9 790.2 L643.5 802.9 L644.3 795.4 L644.9 793.0 L645.4 797.3 L646.3 860.4 L647.2 860.4 L648.1 826.3 L648.9 829.5 L649.5 831.5 L650.1 860.4 L650.6 849.6 L651.3 836.2 L652.0 860.4 L652.7 860.4 L653.3 860.4 L654.2 842.5 L654.9 844.2 L655.8 843.3 L656.7 853.0 L657.6 849.1 L658.5 853.0 L658.5 860.4 L669.4 860.4 L669.7 860.4 L669.7 859.0 L670.3 860.4 L671.1 856.4 L671.7 842.9 L672.5 853.5 L673.2 840.2 L673.9 842.1 L674.9 831.8 L675.8 847.7 L676.4 846.0 L677.1 845.5 L677.6 851.7 L678.3 860.4 L678.9 849.6 L679.7 826.2 L680.5 824.8 L681.2 838.4 L681.8 827.4 L682.3 824.6 L683.1 820.7 L683.7 813.8 L684.6 790.1 L685.4 791.1 L686.2 815.6 L686.8 799.7 L687.7 812.8 L688.5 821.3 L689.1 820.0 L689.8 824.3 L690.4 831.2 L690.9 843.2 L691.5 828.4 L692.3 849.1 L693.1 836.8 L693.9 860.4 L694.5 849.0 L695.2 845.5 L695.7 851.2 L696.6 846.9 L697.3 850.1 L697.9 853.9 L698.0 860.4 L714.4 860.4 L714.7 860.4 L714.7 855.9 L715.4 850.8 L716.2 856.7 L717.1 853.0 L717.7 840.8 L718.3 841.3 L719.2 840.8 L720.1 840.7 L720.7 836.0 L721.3 860.4 L722.0 843.0 L722.5 828.2 L723.1 828.1 L724.0 847.3 L724.7 820.4 L725.4 813.6 L726.0 804.5 L726.6 794.2 L727.3 794.7 L728.0 789.7 L728.9 789.5 L729.8 790.9 L730.4 792.8 L731.2 794.0 L731.8 795.1 L732.5 793.9 L733.4 794.2 L734.2 792.0 L734.9 813.7 L735.5 805.8 L736.1 805.3 L736.9 860.4 L737.5 860.4 L738.1 860.4 L738.8 843.6 L739.7 831.3 L740.4 834.0 L741.1 860.4 L741.7 839.9 L742.5 835.5 L743.1 853.1 L743.8 837.9 L744.7 845.8 L745.3 841.6 L746.0 848.0 L746.7 847.9 L747.5 860.4 L756.7 860.4 L757.0 860.4 L757.0 855.4 L757.6 860.4 L758.3 846.9 L759.2 843.2 L759.9 844.4 L760.8 844.9 L761.6 852.4 L762.2 828.3 L762.8 860.4 L763.6 827.6 L764.2 832.1 L764.9 820.7 L765.7 826.5 L766.3 836.9 L767.2 852.0 L767.9 827.2 L768.5 821.1 L769.2 860.4 L769.9 824.0 L770.5 823.4 L771.2 836.8 L771.9 829.5 L772.5 828.7 L773.5 821.7 L774.1 830.8 L775.0 810.4 L775.7 795.0 L776.2 810.4 L777.1 803.1 L778.1 821.9 L778.7 819.3 L779.3 826.9 L780.0 850.5 L780.5 848.9 L781.4 860.4 L782.4 851.8 L783.3 842.2 L783.8 844.2 L784.8 860.4 L785.5 852.2 L786.0 860.4 L801.2 860.4 L801.5 860.4 L801.5 854.4 L802.0 860.4 L802.6 852.3 L803.5 849.6 L804.1 846.4 L804.7 846.0 L805.4 860.4 L806.3 839.5 L807.2 860.4 L807.8 833.9 L808.8 851.8 L809.5 831.0 L810.1 831.7 L811.0 831.4 L811.7 848.6 L812.6 860.4 L813.2 831.7 L813.7 860.4 L814.5 831.4 L815.4 797.3 L816.0 808.9 L816.8 794.3 L817.6 791.2 L818.4 791.3 L819.0 793.9 L819.8 790.7 L820.4 812.5 L821.0 791.9 L821.7 788.9 L822.4 804.5 L823.2 795.3 L824.0 790.0 L824.9 860.4 L825.6 860.4 L826.2 820.4 L827.1 837.7 L827.8 840.8 L828.8 860.4 L829.6 836.9 L830.3 860.4 L830.9 848.7 L831.7 855.4 L832.4 843.0 L833.0 849.4 L833.8 860.4 L834.4 852.9 L835.2 860.4 L835.8 852.7 L836.0 860.4 L849.7 860.4 L850.0 860.4 L850.0 856.7 L850.7 852.3 L851.4 846.5 L852.1 860.4 L852.9 855.9 L853.9 834.5 L854.6 834.2 L855.2 860.4 L855.9 829.1 L856.5 834.3 L857.2 860.4 L857.9 829.0 L858.5 830.1 L859.4 860.4 L860.0 828.5 L860.8 860.4 L861.7 842.3 L862.5 825.2 L863.4 812.3 L864.3 794.7 L864.9 792.3 L865.6 812.5 L866.5 795.7 L867.2 817.1 L868.1 860.4 L868.9 820.3 L869.6 823.1 L870.3 827.1 L871.0 860.4 L871.8 834.0 L872.7 834.5 L873.3 839.3 L873.9 840.4 L874.6 841.9 L875.4 860.4 L876.3 841.3 L876.8 843.1 L877.8 860.4 L878.7 845.3 L879.6 860.4 L880.0 860.4 L892.7 860.4 L893.0 860.4 L893.0 854.1 L893.9 860.4 L894.8 851.5 L895.5 849.5 L896.4 851.1 L897.0 841.3 L897.6 851.7 L898.3 860.4 L898.9 860.4 L899.9 832.5 L900.5 837.8 L901.2 833.5 L902.1 828.7 L903.1 860.4 L904.0 830.1 L904.9 838.4 L905.7 841.7 L906.4 860.4 L907.3 860.4 L908.2 843.6 L909.1 827.2 L909.8 860.4 L910.4 860.4 L911.2 828.8 L912.1 860.4 L912.7 834.3 L913.2 851.4 L913.9 844.4 L914.7 843.8 L915.5 860.4 L916.4 850.8 L917.0 824.9 L917.8 849.1 L918.4 823.1 L919.1 812.4 L920.0 794.2 L920.9 808.4 L921.6 815.2 L922.5 808.2 L923.5 813.2 L924.3 791.4 L925.2 811.6 L925.8 803.3 L926.7 817.3 L927.6 819.9 L928.5 826.0 L929.0 851.2 L929.7 824.1 L930.6 832.0 L931.4 829.2 L932.1 846.5 L933.1 845.2 L933.6 852.6 L934.5 837.8 L935.2 842.1 L935.8 841.3 L936.6 840.9 L937.4 844.1 L938.3 848.8 L939.0 860.4 L952.7 860.4 L953.0 860.4 L953.0 858.6 L953.8 860.4 L954.7 860.4 L955.3 860.4 L956.2 854.6 L956.8 860.4 L957.6 833.7 L958.5 860.4 L959.2 841.3 L960.1 834.4 L961.1 824.8 L961.6 851.5 L962.2 826.3 L963.0 828.2 L963.6 860.4 L964.2 832.9 L964.9 834.9 L965.5 842.8 L966.2 839.2 L967.0 828.4 L967.5 846.9 L968.4 843.0 L969.1 831.9 L969.7 801.0 L970.2 805.1 L971.2 809.0 L971.9 794.7 L972.7 827.6 L973.3 819.4 L973.9 821.8 L974.5 830.8 L975.4 828.8 L976.2 850.3 L976.9 842.4 L977.8 860.4 L978.4 850.4 L979.2 853.1 L979.8 852.6 L980.0 860.4 L997.7 860.4 L998.0 860.4 L998.0 857.5 L998.7 859.1 L999.6 853.7 L1000.2 852.2 L1001.0 860.4 L1001.7 850.6 L1002.3 853.5 L1003.2 860.4 L1003.8 854.7 L1004.6 860.4 L1005.2 860.4 L1006.2 845.4 L1007.2 860.4 L1007.9 831.1 L1008.7 833.6 L1009.5 860.4 L1010.2 857.2 L1010.9 852.1 L1011.5 860.4 L1022.7 860.4 L1023.0 860.4 L1023.0 855.0 L1023.6 851.3 L1024.4 847.1 L1025.2 837.6 L1025.9 812.9 L1026.7 789.9 L1027.6 792.8 L1028.2 795.3 L1028.9 790.9 L1029.8 810.0 L1030.5 793.1 L1031.3 794.7 L1032.1 793.2 L1032.9 795.7 L1033.6 860.4 L1034.5 837.7 L1035.1 842.5 L1035.9 847.1 L1036.8 847.0 L1037.8 852.9 L1038.5 852.1 L1039.0 860.4 L1052.7 860.4 L1053.0 860.4 L1053.0 859.9 L1053.6 859.1 L1054.4 850.4 L1055.0 857.1 L1055.9 852.4 L1056.5 856.0 L1057.0 860.4 L1594.4 860.4 L1594.7 860.4 L1594.7 860.4 L1595.6 853.6 L1596.3 851.1 L1597.3 852.3 L1598.2 845.5 L1598.8 849.0 L1599.7 855.0 L1600.4 858.5 L1601.0 860.4 L1621.7 860.4 L1622.0 860.4 L1622.0 860.4 L1622.5 854.0 L1623.2 854.5 L1623.9 844.5 L1624.6 843.5 L1625.1 848.7 L1626.0 860.4 L1626.0 860.4 L1629.7 860.4 L1630.0 860.4 L1630.0 858.7 L1630.5 856.0 L1631.2 860.4 L1631.8 855.0 L1632.4 860.4 L1633.4 852.9 L1634.3 855.1 L1635.0 860.4 L1634.7 860.4 L1635.0 860.4 L1635.0 854.4 L1635.9 860.4 L1636.7 834.6 L1637.5 836.0 L1638.1 853.2 L1638.9 860.4 L1639.6 860.4 L1640.3 793.7 L1641.2 805.3 L1642.0 792.8 L1642.9 794.5 L1643.8 811.9 L1644.7 860.4 L1645.5 804.1 L1646.1 813.2 L1646.9 822.8 L1647.7 820.2 L1648.6 842.0 L1649.4 826.3 L1650.1 823.7 L1651.0 839.5 L1651.7 831.4 L1652.5 829.0 L1653.4 849.7 L1654.0 832.6 L1654.9 860.4 L1655.7 837.1 L1656.3 855.2 L1656.9 839.1 L1657.7 838.9 L1658.5 842.5 L1659.4 844.1 L1660.0 848.2 L1660.8 860.4 L1661.0 860.4 L1670.3 860.4 L1670.6 860.4 L1670.6 860.4 L1671.5 848.3 L1672.2 842.6 L1672.9 852.3 L1673.7 848.8 L1674.5 833.5 L1675.3 860.4 L1675.8 821.8 L1676.8 829.3 L1677.5 817.0 L1678.4 824.0 L1679.0 826.6 L1679.6 860.4 L1680.1 827.8 L1681.1 860.4 L1682.0 860.4 L1682.5 824.6 L1683.4 860.4 L1683.9 793.5 L1684.8 796.9 L1685.7 794.2 L1686.6 824.2 L1687.4 860.4 L1688.0 817.7 L1688.5 840.4 L1689.1 830.1 L1689.7 846.9 L1690.4 840.3 L1691.3 849.8 L1692.1 853.5 L1693.0 846.8 L1693.8 858.3 L1694.0 860.4 L1716.3 860.4 L1716.6 860.4 L1716.6 858.1 L1717.3 854.7 L1718.2 852.3 L1718.9 849.3 L1719.7 843.3 L1720.6 856.9 L1721.3 846.4 L1722.1 852.2 L1723.0 853.6 L1723.8 858.6 L1724.0 860.4 L1740.7 860.4 L1741.0 860.4 L1741.0 854.1 L1741.7 860.4 L1742.5 846.2 L1743.3 840.8 L1744.1 834.8 L1744.7 843.2 L1745.6 829.2 L1746.5 813.2 L1747.3 789.7 L1748.0 791.8 L1748.7 813.5 L1749.5 792.0 L1750.2 799.5 L1750.8 809.4 L1751.3 804.6 L1751.9 814.0 L1752.7 860.4 L1753.2 808.9 L1754.0 820.5 L1754.8 812.7 L1755.7 815.1 L1756.3 860.4 L1757.0 860.4 L1757.5 860.4 L1758.3 828.9 L1759.3 835.2 L1760.0 852.2 L1761.0 847.3 L1761.8 834.4 L1762.5 840.1 L1763.5 841.3 L1764.0 852.4 L1765.0 840.1 L1765.5 842.1 L1766.3 847.4 L1766.9 845.6 L1767.7 856.1 L1768.0 860.4 L1780.7 860.4 L1781.0 860.4 L1781.0 860.4 L1781.7 856.8 L1782.4 860.4 L1783.0 860.4 L1783.9 860.4 L1784.7 860.4 L1785.3 826.5 L1786.2 817.7 L1786.8 828.2 L1787.7 821.1 L1788.5 836.3 L1789.2 816.4 L1789.8 806.4 L1790.6 801.7 L1791.3 792.7 L1791.9 791.4 L1792.5 791.5 L1793.4 805.4 L1794.0 807.1 L1794.6 821.2 L1795.2 844.5 L1796.2 820.9 L1796.8 839.7 L1797.3 833.8 L1798.3 860.4 L1799.2 853.8 L1799.7 839.9 L1800.3 839.2 L1800.9 845.9 L1801.6 844.5 L1802.2 860.4 L1802.7 852.1 L1803.0 860.4 L1802.7 860.4 L1803.0 860.4 L1803.0 857.5 L1803.8 847.0 L1804.5 860.4 L1805.3 845.4 L1805.9 834.7 L1806.8 833.1 L1807.3 833.3 L1808.2 851.6 L1809.1 847.3 L1809.8 800.9 L1810.6 793.1 L1811.1 791.0 L1812.1 793.1 L1812.8 822.7 L1813.7 833.3 L1814.4 835.2 L1815.0 839.4 L1815.6 860.4 L1816.2 844.1 L1816.8 844.5 L1817.3 843.6 L1818.1 846.6 L1819.0 847.2 L1819.6 844.8 L1820.2 860.4 L1820.9 860.4 L1821.7 850.7 L1822.5 860.4 L1847.7 860.4 L1848.0 860.4 L1848.0 856.8 L1848.9 854.8 L1849.6 853.2 L1850.3 851.0 L1851.0 856.5 L1851.7 848.0 L1852.6 845.8 L1853.2 843.9 L1854.1 853.2 L1855.0 851.3 L1855.5 840.1 L1856.0 860.4 L1857.0 832.5 L1857.8 830.5 L1858.7 860.4 L1859.6 842.8 L1860.2 808.9 L1861.0 808.6 L1861.7 794.0 L1862.4 795.2 L1863.2 792.3 L1863.8 792.2 L1864.4 815.8 L1865.1 800.0 L1865.7 860.4 L1866.5 808.9 L1867.3 817.5 L1868.1 813.4 L1868.9 818.8 L1869.5 839.8 L1870.2 825.9 L1870.9 824.5 L1871.7 826.0 L1872.7 839.8 L1873.3 860.4 L1874.2 835.2 L1874.9 830.4 L1875.5 839.3 L1876.3 860.4 L1877.0 837.0 L1877.8 813.3 L1878.5 814.6 L1879.4 814.1 L1880.3 824.0 L1881.2 860.4 L1882.0 818.7 L1883.0 820.0 L1883.9 817.3 L1884.6 819.6 L1885.4 843.1 L1886.2 844.5 L1887.1 819.3 L1887.8 860.4 L1888.5 860.4 L1889.3 827.8 L1890.2 837.6 L1891.1 830.3 L1891.8 835.8 L1892.4 833.7 L1893.3 838.5 L1894.3 845.3 L1895.1 856.8 L1895.6 860.4 L1899.5 860.4" fill="none" stroke="#62ee40" stroke-width="1" stroke-linejoin="round"/><path d="M448.3 860.4 L450.5 843.5 L451.7 841.6 L452.3 841.8 L454.7 841.8 L456.6 841.5 L458.8 841.5 L460.1 841.8 L463.1 842.2 L464.8 841.8 L466.4 842.0 L468.6 841.2 L470.9 842.2 L473.3 841.8 L475.0 841.8 L477.9 841.5 L479.9 841.8 L482.5 841.8 L484.0 841.5 L485.3 841.2 L486.5 841.2 L488.3 841.5 L490.9 842.2 L493.5 842.2 L495.5 841.2 L497.9 841.8 L500.8 841.8 L502.1 842.2 L503.7 842.0 L505.8 842.0 L508.7 842.2 L510.9 842.2 L513.3 841.5 L515.7 841.5 L517.3 841.3 L519.9 841.8 L522.8 841.5 L525.3 841.8 L527.9 841.3 L531.1 841.5 L533.4 842.0 L535.9 842.0 L538.8 841.5 L540.5 841.8 L541.8 841.2 L544.3 842.2 L545.7 841.2 L547.0 841.8 L548.3 842.2 L551.0 841.2 L552.4 841.5 L554.9 841.8 L556.8 841.5 L558.7 841.3 L560.9 841.8 L562.7 841.8 L564.1 841.5 L565.4 841.8 L568.5 841.3 L571.0 841.8 L573.5 841.2 L575.4 841.3 L578.5 841.2 L580.5 842.2 L583.4 842.2 L585.9 841.5 L588.5 841.8 L590.9 841.2 L593.1 842.2 L595.6 842.0 L597.3 841.3 L599.4 841.3 L601.6 841.5 L603.5 841.2 L605.5 841.5 L607.3 842.2 L609.8 842.0 L611.2 842.0 L613.7 842.2 L615.6 841.3 L618.0 841.3 L620.7 841.8 L623.1 842.0 L624.3 841.3 L626.0 842.2 L627.8 841.5 L629.7 841.3 L631.2 841.2 L633.2 841.5 L634.9 841.2 L636.8 841.2 L639.7 841.5 L642.2 841.8 L644.1 841.8 L646.6 841.3 L648.2 841.8 L650.8 842.0 L653.4 841.8 L655.8 841.3 L658.3 841.8 L660.4 841.2 L663.5 841.8 L665.4 842.0 L667.1 841.5 L669.2 841.8 L671.9 841.8 L674.2 841.8 L676.0 841.2 L678.9 841.8 L681.8 841.3 L684.6 842.0 L686.0 841.5 L687.9 841.8 L689.9 841.5 L692.7 841.3 L694.9 842.0 L696.9 842.2 L699.2 841.8 L702.3 841.8 L703.9 842.2 L707.0 841.5 L710.1 842.2 L712.4 842.0 L714.1 842.0 L716.2 841.2 L718.7 841.5 L721.9 841.5 L723.7 841.8 L726.7 841.2 L729.0 841.3 L730.5 841.8 L731.8 841.2 L734.4 841.8 L737.4 842.2 L739.7 841.8 L741.9 841.8 L743.4 841.3 L745.1 841.8 L747.3 842.2 L748.6 841.5 L750.1 841.8 L751.8 841.2 L754.1 841.2 L756.8 841.3 L758.5 841.8 L760.7 841.2 L762.2 841.8 L765.0 841.2 L766.4 841.8 L768.6 841.5 L771.5 841.8 L774.2 841.8 L776.0 841.5 L778.2 841.8 L780.4 841.2 L783.2 841.2 L784.5 841.8 L785.8 841.8 L787.1 841.8 L790.0 841.8 L792.3 842.2 L794.1 841.3 L795.4 842.2 L797.9 841.5 L799.7 841.3 L801.3 841.3 L803.4 841.8 L805.7 842.0 L808.3 841.2 L809.7 841.8 L811.0 842.2 L813.4 841.2 L815.7 842.0 L818.5 841.5 L821.5 841.8 L823.4 842.2 L826.1 841.3 L828.2 842.0 L830.2 841.8 L831.9 841.5 L833.6 841.5 L835.0 842.2 L836.6 841.8 L839.6 841.3 L841.5 841.5 L844.3 841.3 L845.8 842.0 L847.2 841.2 L849.9 841.2 L852.8 841.2 L854.8 841.8 L857.5 841.5 L859.7 841.2 L862.1 841.8 L864.2 841.8 L867.0 841.8 L869.2 841.5 L870.6 842.2 L872.2 841.8 L874.1 841.2 L875.5 841.2 L877.0 842.2 L879.8 841.3 L882.2 841.2 L883.6 841.2 L885.9 841.5 L888.5 841.8 L890.8 841.8 L893.9 841.8 L896.2 841.2 L898.5 841.2 L899.9 841.8 L902.4 842.2 L904.8 841.2 L907.9 841.3 L909.8 842.2 L912.9 841.5 L914.9 841.8 L916.9 841.8 L920.0 842.2 L922.9 841.8 L925.0 841.5 L927.7 842.0 L930.7 842.0 L932.9 842.0 L934.9 841.8 L936.4 842.2 L939.1 842.0 L941.3 842.2 L943.7 841.2 L945.3 841.3 L948.0 841.8 L950.4 841.3 L953.4 841.2 L956.0 841.2 L957.8 842.0 L960.7 841.5 L963.6 841.5 L966.8 841.8 L968.6 841.3 L970.8 842.2 L972.4 841.5 L974.3 841.3 L976.5 841.2 L977.9 842.0 L980.1 841.5 L981.7 841.5 L984.6 841.2 L987.1 841.8 L989.2 842.0 L990.6 842.2 L993.4 841.8 L995.5 841.8 L998.5 842.0 L1001.1 842.0 L1002.5 841.8 L1005.4 841.8 L1008.3 841.2 L1010.1 841.8 L1012.5 842.0 L1015.4 841.3 L1017.0 841.8 L1018.8 842.2 L1020.2 841.2 L1021.5 841.8 L1023.3 841.3 L1024.5 842.2 L1026.9 842.0 L1028.8 841.8 L1030.6 842.2 L1032.6 841.8 L1034.2 841.5 L1036.9 842.2 L1038.9 841.5 L1040.7 841.3 L1042.1 842.2 L1043.5 841.5 L1046.5 841.8 L1048.8 842.0 L1050.7 841.2 L1052.7 842.2 L1054.5 842.0 L1057.0 841.2 L1061.0 841.4 L1592.6 847.1 L1594.6 842.7 L1596.0 841.6 L1597.0 841.8 L1599.7 841.3 L1602.3 841.5 L1604.5 842.0 L1606.7 841.3 L1608.0 841.3 L1610.6 841.5 L1613.3 842.0 L1615.7 842.0 L1617.2 841.3 L1620.2 842.0 L1622.3 841.8 L1625.4 841.8 L1628.4 842.0 L1631.1 841.5 L1633.1 841.3 L1635.6 842.2 L1637.8 841.2 L1639.3 841.8 L1640.7 841.8 L1643.5 841.5 L1645.8 842.2 L1647.7 841.3 L1649.5 841.8 L1652.4 841.8 L1654.6 841.3 L1656.3 841.2 L1658.5 841.3 L1661.6 842.2 L1663.9 841.2 L1665.2 842.2 L1668.1 841.8 L1669.6 841.5 L1671.0 841.8 L1673.3 842.0 L1674.8 842.0 L1676.3 842.2 L1678.9 842.2 L1681.7 842.0 L1683.2 841.5 L1684.7 842.2 L1687.5 841.5 L1689.7 841.5 L1691.3 841.2 L1693.0 841.2 L1694.7 841.2 L1697.6 842.2 L1700.7 842.2 L1702.5 841.5 L1704.3 842.2 L1707.5 842.0 L1710.1 841.2 L1712.6 841.8 L1715.0 842.0 L1717.5 841.8 L1720.2 842.0 L1721.9 841.8 L1724.1 842.2 L1725.7 841.2 L1728.0 841.8 L1730.8 842.0 L1733.9 841.8 L1736.2 842.0 L1739.2 841.8 L1741.4 841.8 L1743.8 841.8 L1745.1 841.5 L1746.7 841.8 L1748.9 841.8 L1752.0 841.3 L1753.8 841.3 L1756.4 841.8 L1757.8 841.2 L1760.2 841.8 L1762.8 842.0 L1766.0 841.2 L1767.6 841.8 L1770.5 842.2 L1773.1 841.8 L1775.3 841.8 L1778.1 842.2 L1779.4 841.8 L1782.1 842.2 L1784.2 842.0 L1785.6 841.2 L1787.6 842.0 L1789.8 841.8 L1791.9 841.2 L1794.5 842.2 L1796.1 841.8 L1798.7 841.3 L1801.6 842.2 L1803.9 841.5 L1805.9 841.8 L1808.7 841.3 L1811.5 841.8 L1814.4 841.5 L1816.0 841.8 L1817.2 841.5 L1819.2 841.8 L1821.7 841.8 L1823.1 841.8 L1825.2 841.8 L1826.5 841.8 L1828.5 841.3 L1830.5 842.0 L1833.2 841.8 L1835.2 842.2 L1837.3 841.8 L1839.0 842.2 L1841.2 841.8 L1843.0 841.8 L1844.9 841.8 L1847.3 841.2 L1850.0 841.3 L1853.1 842.2 L1855.9 841.3 L1858.1 841.5 L1859.8 841.2 L1861.7 841.3 L1863.5 841.8 L1866.1 841.8 L1868.5 841.8 L1869.9 842.0 L1871.3 841.8 L1873.5 842.2 L1874.8 842.0 L1877.0 841.3 L1878.6 841.2 L1880.8 841.2 L1882.9 841.3 L1886.0 841.8 L1888.0 841.2 L1890.4 842.2 L1891.8 841.3 L1893.3 842.2 L1894.8 842.2 L1897.1 841.5 L1899.5 841.4" fill="none" stroke="#ea6a40" stroke-width="1"/><path d="M448.4 619.1 L464.2 619.1 L472.3 621 L490 625.9 L498.1 633.9 L504.6 637.5 L514.3 640.7 L543.3 649.7 L549.8 655.2 L575.6 664.6 L601.5 672.3 L611.1 674.6 L620.8 679.5 L635.4 682.7 L646.7 692 L659.6 695 L685.4 704.6 L695.1 711.1 L708 716.3 L724.1 721.1 L733.8 728.2 L750 731.1 L772.6 735.3 L782.3 739.2 L814.6 742.7 L822.6 748.2 L838.8 752.1 L861.4 753.4 L869.5 756.3 L911.4 759.9 L924.3 766.3 L938.9 768.9 L969.5 770.5 L976 774.4 L1014.7 776 L1022.8 596.1 L1029.3 596.1 L1029.9 599 L1030.6 596 L1031.6 596 L1032.2 599.2 L1034.1 600.3 L1055.1 600.3 L1060 602.6 L1300 602.8 L1597 603.2 L1611.6 604.5 L1626 607.1 L1637.4 607.4 L1645.5 612.3 L1664.9 615.5 L1677.8 619.7 L1687.5 627.1 L1700.4 630.7 L1719.8 638.1 L1727.8 640.1 L1744 640.4 L1755.3 649.4 L1765 653.6 L1784.3 659.4 L1800.5 668.8 L1810.2 671.4 L1816.6 676.2 L1829.5 680.1 L1842.5 685.3 L1858.6 689.8 L1871.5 698.8 L1884.4 705.9 L1892.5 711.7 L1899.5 712.4" fill="none" stroke="#f27aa0" stroke-width="0.95" stroke-linejoin="round"/><path d="M448.3 860.4 H1899.5" stroke="#c07ac0" stroke-width="1.3"/><defs><filter id="sh" x="-30%" y="-30%" width="160%" height="160%"><feDropShadow dx="0" dy="1" stdDeviation="1.6" flood-color="#000" flood-opacity=".28"/></filter></defs><circle cx="448.2" cy="569" r="15.1" fill="#fff" filter="url(#sh)"/><path d="M446.59999999999997 563 V575 M449.8 563 V575" stroke="#b8b8b8" stroke-width="1"/><circle cx="1899.8" cy="569" r="15.1" fill="#fff" filter="url(#sh)"/><path d="M1898.2 563 V575 M1901.3999999999999 563 V575" stroke="#b8b8b8" stroke-width="1"/><path d="M448.3 910.5 H480.5" stroke="#62ee40" stroke-width="1.1"/><circle cx="464.7" cy="910.5" r="4.5" fill="#62ee40"/><path d="M751.7 910.5 H783.9000000000001" stroke="#ea6a40" stroke-width="1.1"/><circle cx="768.1" cy="910.5" r="4.5" fill="#ea6a40"/><path d="M1055 910.5 H1087.2" stroke="#f0648c" stroke-width="1.1"/><circle cx="1071.4" cy="910.5" r="4.5" fill="#f0648c"/><path d="M1357.6 910.5 H1389.8" stroke="#ea6cc8" stroke-width="1.1"/><circle cx="1374.0" cy="910.5" r="4.5" fill="#ea6cc8"/></svg>
<span style="position:absolute;left:429.22px;top:855.13px;font-size:10.6px;line-height:10.6px;white-space:nowrap;color:#000;font-family:'DejaVu Sans',sans-serif;">0</span><span style="position:absolute;left:422.42px;top:814.94px;font-size:10.6px;line-height:10.6px;white-space:nowrap;color:#000;font-family:'DejaVu Sans',sans-serif;letter-spacing:-0.13px;">50</span><span style="position:absolute;left:415.42px;top:774.75px;font-size:10.6px;line-height:10.6px;white-space:nowrap;color:#000;font-family:'DejaVu Sans',sans-serif;letter-spacing:0.06px;">100</span><span style="position:absolute;left:415.42px;top:734.56px;font-size:10.6px;line-height:10.6px;white-space:nowrap;color:#000;font-family:'DejaVu Sans',sans-serif;letter-spacing:0.06px;">150</span><span style="position:absolute;left:415.42px;top:694.37px;font-size:10.6px;line-height:10.6px;white-space:nowrap;color:#000;font-family:'DejaVu Sans',sans-serif;letter-spacing:0.06px;">200</span><span style="position:absolute;left:415.42px;top:654.18px;font-size:10.6px;line-height:10.6px;white-space:nowrap;color:#000;font-family:'DejaVu Sans',sans-serif;letter-spacing:0.06px;">250</span><span style="position:absolute;left:415.42px;top:613.99px;font-size:10.6px;line-height:10.6px;white-space:nowrap;color:#000;font-family:'DejaVu Sans',sans-serif;letter-spacing:0.06px;">300</span><span style="position:absolute;left:415.42px;top:573.80px;font-size:10.6px;line-height:10.6px;white-space:nowrap;color:#000;font-family:'DejaVu Sans',sans-serif;letter-spacing:0.06px;">350</span><span style="position:absolute;left:448.12px;top:869.83px;font-size:10.6px;line-height:10.6px;white-space:nowrap;color:#000;font-family:'DejaVu Sans',sans-serif;letter-spacing:0.53px;">09:00</span><span style="position:absolute;left:603.25px;top:869.83px;font-size:10.6px;line-height:10.6px;white-space:nowrap;color:#000;font-family:'DejaVu Sans',sans-serif;letter-spacing:0.53px;">12:00</span><span style="position:absolute;left:758.38px;top:869.83px;font-size:10.6px;line-height:10.6px;white-space:nowrap;color:#000;font-family:'DejaVu Sans',sans-serif;letter-spacing:0.53px;">15:00</span><span style="position:absolute;left:913.51px;top:869.83px;font-size:10.6px;line-height:10.6px;white-space:nowrap;color:#000;font-family:'DejaVu Sans',sans-serif;letter-spacing:0.53px;">18:00</span><span style="position:absolute;left:1068.64px;top:869.83px;font-size:10.6px;line-height:10.6px;white-space:nowrap;color:#000;font-family:'DejaVu Sans',sans-serif;letter-spacing:0.53px;">21:00</span><span style="position:absolute;left:1223.37px;top:869.83px;font-size:10.6px;line-height:10.6px;white-space:nowrap;color:#000;font-weight:700;font-family:'DejaVu Sans',sans-serif;letter-spacing:0.53px;transform:scaleX(1.0161);transform-origin:0 0;">Jan 17</span><span style="position:absolute;left:1378.90px;top:869.83px;font-size:10.6px;line-height:10.6px;white-space:nowrap;color:#000;font-family:'DejaVu Sans',sans-serif;letter-spacing:0.53px;">03:00</span><span style="position:absolute;left:1534.03px;top:869.83px;font-size:10.6px;line-height:10.6px;white-space:nowrap;color:#000;font-family:'DejaVu Sans',sans-serif;letter-spacing:0.53px;">06:00</span><span style="position:absolute;left:1689.16px;top:869.83px;font-size:10.6px;line-height:10.6px;white-space:nowrap;color:#000;font-family:'DejaVu Sans',sans-serif;letter-spacing:0.53px;">09:00</span><span style="position:absolute;left:1844.29px;top:869.83px;font-size:10.6px;line-height:10.6px;white-space:nowrap;color:#000;font-family:'DejaVu Sans',sans-serif;letter-spacing:0.53px;">12:00</span><span style="position:absolute;left:485.00px;top:905.69px;font-size:11px;line-height:11px;white-space:nowrap;color:#000;font-family:'DejaVu Sans',sans-serif;letter-spacing:-0.22px;">Скорость</span><span style="position:absolute;left:787.80px;top:905.69px;font-size:11px;line-height:11px;white-space:nowrap;color:#000;font-family:'DejaVu Sans',sans-serif;letter-spacing:-0.22px;">Спутники</span><span style="position:absolute;left:1090.81px;top:905.69px;font-size:11px;line-height:11px;white-space:nowrap;color:#000;font-family:'DejaVu Sans',sans-serif;letter-spacing:-0.07px;">ДУТ(фильтр)</span><span style="position:absolute;left:1393.81px;top:905.69px;font-size:11px;line-height:11px;white-space:nowrap;color:#000;font-family:'DejaVu Sans',sans-serif;letter-spacing:-0.20px;">Напряжение бортовой сети</span><div class="abs" style="left:1914.2px;top:501.5px;width:3px;height:139px;background:rgba(0,0,0,.5);border-radius:1.5px;"></div>
<!-- reports table -->
<div class="abs" style="left:400px;top:70px;width:27px;height:34.2px;background:#1a3b62;"></div>
<svg class="abs" style="left:404px;top:81px" width="18" height="14" viewBox="0 0 18 14"><path d="M7.6 1.4 L2.2 7.2 L7.6 13 M15.8 1.4 L10.4 7.2 L15.8 13" fill="none" stroke="#fff" stroke-width="2"/></svg>
<span style="position:absolute;left:439.65px;top:81.79px;font-size:12.3px;line-height:12.3px;white-space:nowrap;color:#fff;font-weight:700;letter-spacing:0.11px;">ОТЧЕТЫ</span><div class="abs" style="left:509px;top:79.5px;width:1.4px;height:16px;background:#2b4f7a;"></div>
<span style="position:absolute;left:529.01px;top:82.10px;font-size:13px;line-height:13px;white-space:nowrap;color:#fff;letter-spacing:-0.64px;">ПОЕЗДКИ</span><div class="abs" style="left:526px;top:101.4px;width:64px;height:2.2px;background:#fff;"></div>
<span style="position:absolute;left:608.81px;top:82.10px;font-size:13px;line-height:13px;white-space:nowrap;color:#9fc0e4;letter-spacing:-0.65px;">ОСТАНОВКИ</span><span style="position:absolute;left:705.66px;top:82.10px;font-size:13px;line-height:13px;white-space:nowrap;color:#9fc0e4;letter-spacing:-0.57px;">СТОЯНКИ</span><span style="position:absolute;left:785.81px;top:82.10px;font-size:13px;line-height:13px;white-space:nowrap;color:#9fc0e4;letter-spacing:-0.57px;">СТАТИСТИКА</span><span style="position:absolute;left:886.41px;top:82.10px;font-size:13px;line-height:13px;white-space:nowrap;color:#9fc0e4;letter-spacing:-0.63px;">ЗАПРАВКИ/СЛИВЫ</span><svg class="abs" style="left:1803.6px;top:77.6px" width="21" height="19" viewBox="0 0 21 19"><g fill="none" stroke="#fff" stroke-width="1.15" stroke-linejoin="round"><path d="M.8 3.2 L7.6 10.2 V17.8 L10.8 15.8 V10.2 L17.6 3.2"/><ellipse cx="9.2" cy="3" rx="8.4" ry="2.3"/><path d="M15.2 13.2 L19.4 17.4 M19.4 13.2 L15.2 17.4" stroke-width="1.25"/></g></svg>
<svg class="abs" style="left:1835px;top:77.6px" width="11" height="18" viewBox="0 0 11 18"><path d="M5.5 1.2 V16.8 M2.2 4.4 L5.5 1 L8.8 4.4 M2.2 13.6 L5.5 17 L8.8 13.6" fill="none" stroke="#fff" stroke-width="1.15" stroke-linecap="round" stroke-linejoin="round"/></svg>
<svg class="abs" style="left:1856px;top:77px" width="19" height="19" viewBox="0 0 19 19"><g fill="none" stroke="#fff" stroke-width="1.15"><circle cx="9.5" cy="9.5" r="8.3"/><path d="M6.2 6.2 L12.8 12.8 M12.8 6.2 L6.2 12.8" stroke-linecap="round"/></g></svg>
<div class="abs" style="left:427px;top:104px;width:1459px;height:32px;background:#1f4a72;"></div>
<div class="abs" style="left:451.9px;top:104px;width:1.2px;height:32px;background:#40658c;"></div>
<div class="abs" style="left:615.0px;top:104px;width:1.2px;height:32px;background:#40658c;"></div>
<div class="abs" style="left:777.8px;top:104px;width:1.2px;height:32px;background:#40658c;"></div>
<div class="abs" style="left:1161.0px;top:104px;width:1.2px;height:32px;background:#40658c;"></div>
<div class="abs" style="left:1543.8000000000002px;top:104px;width:1.2px;height:32px;background:#40658c;"></div>
<div class="abs" style="left:1651.7px;top:104px;width:1.2px;height:32px;background:#40658c;"></div>
<div class="abs" style="left:1759.6000000000001px;top:104px;width:1.2px;height:32px;background:#40658c;"></div>
<span style="position:absolute;left:432.48px;top:114.57px;font-size:11.5px;line-height:11.5px;white-space:nowrap;color:#fff;font-weight:700;">№</span><span style="position:absolute;left:458.88px;top:114.57px;font-size:11.5px;line-height:11.5px;white-space:nowrap;color:#fff;font-weight:700;letter-spacing:0.16px;">Время начала</span><span style="position:absolute;left:621.78px;top:114.57px;font-size:11.5px;line-height:11.5px;white-space:nowrap;color:#fff;font-weight:700;letter-spacing:0.20px;">Время окончания</span><span style="position:absolute;left:784.48px;top:114.57px;font-size:11.5px;line-height:11.5px;white-space:nowrap;color:#fff;font-weight:700;letter-spacing:0.27px;">Начальное положение</span><span style="position:absolute;left:1167.78px;top:114.57px;font-size:11.5px;line-height:11.5px;white-space:nowrap;color:#fff;font-weight:700;letter-spacing:0.29px;">Конечное положение</span><span style="position:absolute;left:1578.88px;top:114.57px;font-size:11.5px;line-height:11.5px;white-space:nowrap;color:#fff;font-weight:700;letter-spacing:0.19px;">Пробег (км)</span><span style="position:absolute;left:1696.18px;top:107.97px;font-size:11.5px;line-height:11.5px;white-space:nowrap;color:#fff;font-weight:700;letter-spacing:0.12px;">Пробег по</span><span style="position:absolute;left:1671.48px;top:119.77px;font-size:11.5px;line-height:11.5px;white-space:nowrap;color:#fff;font-weight:700;letter-spacing:0.30px;">одометру (км)</span><span style="position:absolute;left:1806.98px;top:114.57px;font-size:11.5px;line-height:11.5px;white-space:nowrap;color:#fff;font-weight:700;letter-spacing:0.58px;">Длительность</span><div class="abs" style="left:427px;top:136px;width:1459px;height:24.4px;background:#fff;"></div>
<div class="abs" style="left:427px;top:160.4px;width:1459px;height:23.5px;background:#eff1f6;"></div>
<div class="abs" style="left:427px;top:183.9px;width:1459px;height:24px;background:#fff;"></div>
<div class="abs" style="left:427px;top:207.9px;width:1459px;height:24px;background:#eff1f6;"></div>
<div class="abs" style="left:427px;top:231.9px;width:1459px;height:24px;background:#fff;"></div>
<div class="abs" style="left:427px;top:255.9px;width:1459px;height:24px;background:#eff1f6;"></div>
<div class="abs" style="left:427px;top:279.9px;width:1459px;height:24px;background:#fff;"></div>
<div class="abs" style="left:427px;top:303.9px;width:1459px;height:24px;background:#eff1f6;"></div>
<div class="abs" style="left:427px;top:327.9px;width:1459px;height:24px;background:#fff;"></div>
<div class="abs" style="left:427px;top:351.9px;width:1459px;height:24px;background:#eff1f6;"></div>
<div class="abs" style="left:427px;top:375.9px;width:1459px;height:24px;background:#fff;"></div>
<div class="abs" style="left:427px;top:399.9px;width:1459px;height:24px;background:#eff1f6;"></div>
<div class="abs" style="left:427px;top:159.8px;width:1459px;height:1.2px;background:#c3cde0;"></div>
<div class="abs" style="left:427px;top:423.8px;width:1459px;height:1.2px;background:#b7c4da;"></div>
<div class="abs" style="left:451.9px;top:136px;width:1.2px;height:288.5px;background:#c3cde0;"></div>
<div class="abs" style="left:615.0px;top:136px;width:1.2px;height:288.5px;background:#c3cde0;"></div>
<div class="abs" style="left:777.8px;top:136px;width:1.2px;height:288.5px;background:#c3cde0;"></div>
<div class="abs" style="left:1161.0px;top:136px;width:1.2px;height:288.5px;background:#c3cde0;"></div>
<div class="abs" style="left:1543.8000000000002px;top:136px;width:1.2px;height:288.5px;background:#c3cde0;"></div>
<div class="abs" style="left:1651.7px;top:136px;width:1.2px;height:288.5px;background:#c3cde0;"></div>
<div class="abs" style="left:1759.6000000000001px;top:136px;width:1.2px;height:288.5px;background:#c3cde0;"></div>
<div class="abs" style="left:460px;top:155.2px;width:131.70000000000005px;height:1px;background:#7c92b4;"></div>
<svg class="abs" style="left:594.8px;top:141px" width="16" height="16" viewBox="0 0 16 16"><g fill="none" stroke="#1c3557" stroke-width="1.05" stroke-linejoin="round"><path d="M.7 2.9 L6.6 9.3 V15 L9.4 13.2 V9.3 L15.3 2.9"/><ellipse cx="8" cy="2.7" rx="7.3" ry="2"/></g></svg>
<div class="abs" style="left:623px;top:155.2px;width:131.79999999999995px;height:1px;background:#7c92b4;"></div>
<svg class="abs" style="left:758px;top:141px" width="16" height="16" viewBox="0 0 16 16"><g fill="none" stroke="#1c3557" stroke-width="1.05" stroke-linejoin="round"><path d="M.7 2.9 L6.6 9.3 V15 L9.4 13.2 V9.3 L15.3 2.9"/><ellipse cx="8" cy="2.7" rx="7.3" ry="2"/></g></svg>
<div class="abs" style="left:786px;top:155.2px;width:126.70000000000005px;height:1px;background:#7c92b4;"></div>
<svg class="abs" style="left:916px;top:141px" width="16" height="16" viewBox="0 0 16 16"><g fill="none" stroke="#1c3557" stroke-width="1.05" stroke-linejoin="round"><path d="M.7 2.9 L6.6 9.3 V15 L9.4 13.2 V9.3 L15.3 2.9"/><ellipse cx="8" cy="2.7" rx="7.3" ry="2"/></g></svg>
<div class="abs" style="left:1169px;top:155.2px;width:126px;height:1px;background:#7c92b4;"></div>
<svg class="abs" style="left:1299px;top:141px" width="16" height="16" viewBox="0 0 16 16"><g fill="none" stroke="#1c3557" stroke-width="1.05" stroke-linejoin="round"><path d="M.7 2.9 L6.6 9.3 V15 L9.4 13.2 V9.3 L15.3 2.9"/><ellipse cx="8" cy="2.7" rx="7.3" ry="2"/></g></svg>
<span style="position:absolute;left:1551.21px;top:142.29px;font-size:11px;line-height:11px;white-space:nowrap;color:#1d2938;">С</span><div class="abs" style="left:1564.4px;top:155.2px;width:21.199999999999818px;height:1px;background:#7c92b4;"></div>
<span style="position:absolute;left:1589.31px;top:142.29px;font-size:11px;line-height:11px;white-space:nowrap;color:#1d2938;letter-spacing:0.19px;">До</span><div class="abs" style="left:1607.5px;top:155.2px;width:21.25px;height:1px;background:#7c92b4;"></div>
<svg class="abs" style="left:1632.5px;top:141px" width="16" height="16" viewBox="0 0 16 16"><g fill="none" stroke="#1c3557" stroke-width="1.05" stroke-linejoin="round"><path d="M.7 2.9 L6.6 9.3 V15 L9.4 13.2 V9.3 L15.3 2.9"/><ellipse cx="8" cy="2.7" rx="7.3" ry="2"/></g></svg>
<span style="position:absolute;left:1659.11px;top:142.29px;font-size:11px;line-height:11px;white-space:nowrap;color:#1d2938;">С</span><div class="abs" style="left:1672.5px;top:155.2px;width:21.0px;height:1px;background:#7c92b4;"></div>
<span style="position:absolute;left:1697.21px;top:142.29px;font-size:11px;line-height:11px;white-space:nowrap;color:#1d2938;letter-spacing:0.19px;">До</span><div class="abs" style="left:1715.4px;top:155.2px;width:21.299999999999955px;height:1px;background:#7c92b4;"></div>
<svg class="abs" style="left:1740.4px;top:141px" width="16" height="16" viewBox="0 0 16 16"><g fill="none" stroke="#1c3557" stroke-width="1.05" stroke-linejoin="round"><path d="M.7 2.9 L6.6 9.3 V15 L9.4 13.2 V9.3 L15.3 2.9"/><ellipse cx="8" cy="2.7" rx="7.3" ry="2"/></g></svg>
<span style="position:absolute;left:1767.01px;top:142.29px;font-size:11px;line-height:11px;white-space:nowrap;color:#1d2938;">С</span><div class="abs" style="left:1778.3px;top:155.2px;width:35.450000000000045px;height:1px;background:#7c92b4;"></div>
<span style="position:absolute;left:1819.11px;top:142.29px;font-size:11px;line-height:11px;white-space:nowrap;color:#1d2938;letter-spacing:0.19px;">До</span><div class="abs" style="left:1837px;top:155.2px;width:35.5px;height:1px;background:#7c92b4;"></div>
<svg class="abs" style="left:1876.25px;top:141px" width="16" height="16" viewBox="0 0 16 16"><g fill="none" stroke="#1c3557" stroke-width="1.05" stroke-linejoin="round"><path d="M.7 2.9 L6.6 9.3 V15 L9.4 13.2 V9.3 L15.3 2.9"/><ellipse cx="8" cy="2.7" rx="7.3" ry="2"/></g></svg>
<span style="position:absolute;left:433.31px;top:167.69px;font-size:11px;line-height:11px;white-space:nowrap;color:#1d2938;">1</span><span style="position:absolute;left:459.31px;top:167.69px;font-size:11px;line-height:11px;white-space:nowrap;color:#1d2938;letter-spacing:0.06px;">16.01.2018 09:12</span><span style="position:absolute;left:622.30px;top:167.69px;font-size:11px;line-height:11px;white-space:nowrap;color:#1d2938;letter-spacing:0.06px;">16.01.2018 09:16</span><span style="position:absolute;left:784.50px;top:167.69px;font-size:11px;line-height:11px;white-space:nowrap;color:#1d2938;letter-spacing:0.19px;">«Урал», сельское поселение Пестриковское, Московская область, РФ</span><span style="position:absolute;left:1167.81px;top:167.69px;font-size:11px;line-height:11px;white-space:nowrap;color:#1d2938;letter-spacing:0.19px;">«Урал», сельское поселение Пестриковское, Московская область, РФ</span><span style="position:absolute;left:1629.61px;top:167.69px;font-size:11px;line-height:11px;white-space:nowrap;color:#1d2938;letter-spacing:0.55px;transform:scaleX(1.0125);transform-origin:0 0;">0.7</span><span style="position:absolute;left:1747.71px;top:167.69px;font-size:11px;line-height:11px;white-space:nowrap;color:#1d2938;">0</span><span style="position:absolute;left:1846.21px;top:167.69px;font-size:11px;line-height:11px;white-space:nowrap;color:#1d2938;letter-spacing:0.22px;">00:03:41</span><span style="position:absolute;left:433.31px;top:190.69px;font-size:11px;line-height:11px;white-space:nowrap;color:#1d2938;">2</span><span style="position:absolute;left:459.31px;top:190.69px;font-size:11px;line-height:11px;white-space:nowrap;color:#1d2938;letter-spacing:0.06px;">16.01.2018 09:36</span><span style="position:absolute;left:622.30px;top:190.69px;font-size:11px;line-height:11px;white-space:nowrap;color:#1d2938;letter-spacing:0.06px;">16.01.2018 10:17</span><span style="position:absolute;left:784.50px;top:190.69px;font-size:11px;line-height:11px;white-space:nowrap;color:#1d2938;letter-spacing:0.19px;">«Урал», сельское поселение Пестриковское, Московская область, РФ</span><span style="position:absolute;left:1167.81px;top:190.69px;font-size:11px;line-height:11px;white-space:nowrap;color:#1d2938;letter-spacing:0.22px;">Репинская улица, Коломна, Московская область, РФ</span><span style="position:absolute;left:1623.81px;top:190.69px;font-size:11px;line-height:11px;white-space:nowrap;color:#1d2938;letter-spacing:0.32px;">24.9</span><span style="position:absolute;left:1747.71px;top:190.69px;font-size:11px;line-height:11px;white-space:nowrap;color:#1d2938;">0</span><span style="position:absolute;left:1846.21px;top:190.69px;font-size:11px;line-height:11px;white-space:nowrap;color:#1d2938;letter-spacing:0.22px;">00:41:41</span><span style="position:absolute;left:433.31px;top:214.69px;font-size:11px;line-height:11px;white-space:nowrap;color:#1d2938;">3</span><span style="position:absolute;left:459.31px;top:214.69px;font-size:11px;line-height:11px;white-space:nowrap;color:#1d2938;letter-spacing:0.06px;">16.01.2018 10:36</span><span style="position:absolute;left:622.30px;top:214.69px;font-size:11px;line-height:11px;white-space:nowrap;color:#1d2938;letter-spacing:0.12px;">16.01.2018 11:05</span><span style="position:absolute;left:784.50px;top:214.69px;font-size:11px;line-height:11px;white-space:nowrap;color:#1d2938;letter-spacing:0.22px;">Репинская улица, Коломна, Московская область, РФ</span><span style="position:absolute;left:1167.81px;top:214.69px;font-size:11px;line-height:11px;white-space:nowrap;color:#1d2938;letter-spacing:0.19px;">«Урал», сельское поселение Пестриковское, Московская область, РФ</span><span style="position:absolute;left:1623.81px;top:214.69px;font-size:11px;line-height:11px;white-space:nowrap;color:#1d2938;letter-spacing:0.32px;">15.4</span><span style="position:absolute;left:1747.71px;top:214.69px;font-size:11px;line-height:11px;white-space:nowrap;color:#1d2938;">0</span><span style="position:absolute;left:1846.21px;top:214.69px;font-size:11px;line-height:11px;white-space:nowrap;color:#1d2938;letter-spacing:0.22px;">00:29:00</span><span style="position:absolute;left:433.31px;top:238.69px;font-size:11px;line-height:11px;white-space:nowrap;color:#1d2938;">4</span><span style="position:absolute;left:459.31px;top:238.69px;font-size:11px;line-height:11px;white-space:nowrap;color:#1d2938;letter-spacing:0.06px;">16.01.2018 12:10</span><span style="position:absolute;left:622.30px;top:238.69px;font-size:11px;line-height:11px;white-space:nowrap;color:#1d2938;letter-spacing:0.06px;">16.01.2018 12:17</span><span style="position:absolute;left:784.50px;top:238.69px;font-size:11px;line-height:11px;white-space:nowrap;color:#1d2938;letter-spacing:0.19px;">«Урал», сельское поселение Пестриковское, Московская область, РФ</span><span style="position:absolute;left:1167.81px;top:238.69px;font-size:11px;line-height:11px;white-space:nowrap;color:#1d2938;letter-spacing:0.27px;">Амерево, Коломенский район, Московская область, РФ</span><span style="position:absolute;left:1629.61px;top:238.69px;font-size:11px;line-height:11px;white-space:nowrap;color:#1d2938;letter-spacing:0.55px;transform:scaleX(1.0125);transform-origin:0 0;">1.1</span><span style="position:absolute;left:1747.71px;top:238.69px;font-size:11px;line-height:11px;white-space:nowrap;color:#1d2938;">0</span><span style="position:absolute;left:1846.21px;top:238.69px;font-size:11px;line-height:11px;white-space:nowrap;color:#1d2938;letter-spacing:0.22px;">00:06:28</span><span style="position:absolute;left:433.31px;top:262.69px;font-size:11px;line-height:11px;white-space:nowrap;color:#1d2938;">5</span><span style="position:absolute;left:459.31px;top:262.69px;font-size:11px;line-height:11px;white-space:nowrap;color:#1d2938;letter-spacing:0.06px;">16.01.2018 12:35</span><span style="position:absolute;left:622.30px;top:262.69px;font-size:11px;line-height:11px;white-space:nowrap;color:#1d2938;letter-spacing:0.06px;">16.01.2018 13:05</span><span style="position:absolute;left:784.50px;top:262.69px;font-size:11px;line-height:11px;white-space:nowrap;color:#1d2938;letter-spacing:0.27px;">Амерево, Коломенский район, Московская область, РФ</span><span style="position:absolute;left:1167.81px;top:262.69px;font-size:11px;line-height:11px;white-space:nowrap;color:#1d2938;letter-spacing:0.22px;">Репинская улица, Коломна, Московская область, РФ</span><span style="position:absolute;left:1623.81px;top:262.69px;font-size:11px;line-height:11px;white-space:nowrap;color:#1d2938;letter-spacing:0.32px;">23.9</span><span style="position:absolute;left:1747.71px;top:262.69px;font-size:11px;line-height:11px;white-space:nowrap;color:#1d2938;">0</span><span style="position:absolute;left:1846.21px;top:262.69px;font-size:11px;line-height:11px;white-space:nowrap;color:#1d2938;letter-spacing:0.22px;">00:29:58</span><span style="position:absolute;left:433.31px;top:286.69px;font-size:11px;line-height:11px;white-space:nowrap;color:#1d2938;">6</span><span style="position:absolute;left:459.31px;top:286.69px;font-size:11px;line-height:11px;white-space:nowrap;color:#1d2938;letter-spacing:0.06px;">16.01.2018 13:21</span><span style="position:absolute;left:622.30px;top:286.69px;font-size:11px;line-height:11px;white-space:nowrap;color:#1d2938;letter-spacing:0.06px;">16.01.2018 13:49</span><span style="position:absolute;left:784.50px;top:286.69px;font-size:11px;line-height:11px;white-space:nowrap;color:#1d2938;letter-spacing:0.22px;">Репинская улица, Коломна, Московская область, РФ</span><span style="position:absolute;left:1167.81px;top:286.69px;font-size:11px;line-height:11px;white-space:nowrap;color:#1d2938;letter-spacing:0.19px;">«Урал», сельское поселение Пестриковское, Московская область, РФ</span><span style="position:absolute;left:1623.81px;top:286.69px;font-size:11px;line-height:11px;white-space:nowrap;color:#1d2938;letter-spacing:0.32px;">15.4</span><span style="position:absolute;left:1747.71px;top:286.69px;font-size:11px;line-height:11px;white-space:nowrap;color:#1d2938;">0</span><span style="position:absolute;left:1846.21px;top:286.69px;font-size:11px;line-height:11px;white-space:nowrap;color:#1d2938;letter-spacing:0.22px;">00:28:25</span><span style="position:absolute;left:433.31px;top:310.69px;font-size:11px;line-height:11px;white-space:nowrap;color:#1d2938;">7</span><span style="position:absolute;left:459.31px;top:310.69px;font-size:11px;line-height:11px;white-space:nowrap;color:#1d2938;letter-spacing:0.06px;">16.01.2018 14:12</span><span style="position:absolute;left:622.30px;top:310.69px;font-size:11px;line-height:11px;white-space:nowrap;color:#1d2938;letter-spacing:0.06px;">16.01.2018 14:49</span><span style="position:absolute;left:784.50px;top:310.69px;font-size:11px;line-height:11px;white-space:nowrap;color:#1d2938;letter-spacing:0.19px;">«Урал», сельское поселение Пестриковское, Московская область, РФ</span><span style="position:absolute;left:1167.81px;top:310.69px;font-size:11px;line-height:11px;white-space:nowrap;color:#1d2938;letter-spacing:0.22px;">Репинская улица, Коломна, Московская область, РФ</span><span style="position:absolute;left:1623.81px;top:310.69px;font-size:11px;line-height:11px;white-space:nowrap;color:#1d2938;letter-spacing:0.32px;">24.9</span><span style="position:absolute;left:1747.71px;top:310.69px;font-size:11px;line-height:11px;white-space:nowrap;color:#1d2938;">0</span><span style="position:absolute;left:1846.21px;top:310.69px;font-size:11px;line-height:11px;white-space:nowrap;color:#1d2938;letter-spacing:0.22px;">00:36:49</span><span style="position:absolute;left:433.31px;top:334.69px;font-size:11px;line-height:11px;white-space:nowrap;color:#1d2938;">8</span><span style="position:absolute;left:459.31px;top:334.69px;font-size:11px;line-height:11px;white-space:nowrap;color:#1d2938;letter-spacing:0.06px;">16.01.2018 15:03</span><span style="position:absolute;left:622.30px;top:334.69px;font-size:11px;line-height:11px;white-space:nowrap;color:#1d2938;letter-spacing:0.06px;">16.01.2018 15:33</span><span style="position:absolute;left:784.50px;top:334.69px;font-size:11px;line-height:11px;white-space:nowrap;color:#1d2938;letter-spacing:0.22px;">Репинская улица, Коломна, Московская область, РФ</span><span style="position:absolute;left:1167.81px;top:334.69px;font-size:11px;line-height:11px;white-space:nowrap;color:#1d2938;letter-spacing:0.19px;">«Урал», сельское поселение Пестриковское, Московская область, РФ</span><span style="position:absolute;left:1623.81px;top:334.69px;font-size:11px;line-height:11px;white-space:nowrap;color:#1d2938;letter-spacing:0.32px;">15.4</span><span style="position:absolute;left:1747.71px;top:334.69px;font-size:11px;line-height:11px;white-space:nowrap;color:#1d2938;">0</span><span style="position:absolute;left:1846.21px;top:334.69px;font-size:11px;line-height:11px;white-space:nowrap;color:#1d2938;letter-spacing:0.22px;">00:29:50</span><span style="position:absolute;left:433.31px;top:358.69px;font-size:11px;line-height:11px;white-space:nowrap;color:#1d2938;">9</span><span style="position:absolute;left:459.31px;top:358.69px;font-size:11px;line-height:11px;white-space:nowrap;color:#1d2938;letter-spacing:0.06px;">16.01.2018 15:53</span><span style="position:absolute;left:622.30px;top:358.69px;font-size:11px;line-height:11px;white-space:nowrap;color:#1d2938;letter-spacing:0.06px;">16.01.2018 16:32</span><span style="position:absolute;left:784.50px;top:358.69px;font-size:11px;line-height:11px;white-space:nowrap;color:#1d2938;letter-spacing:0.19px;">«Урал», сельское поселение Пестриковское, Московская область, РФ</span><span style="position:absolute;left:1167.81px;top:358.69px;font-size:11px;line-height:11px;white-space:nowrap;color:#1d2938;letter-spacing:0.22px;">Репинская улица, Коломна, Московская область, РФ</span><span style="position:absolute;left:1623.81px;top:358.69px;font-size:11px;line-height:11px;white-space:nowrap;color:#1d2938;letter-spacing:0.32px;">24.9</span><span style="position:absolute;left:1747.71px;top:358.69px;font-size:11px;line-height:11px;white-space:nowrap;color:#1d2938;">0</span><span style="position:absolute;left:1846.21px;top:358.69px;font-size:11px;line-height:11px;white-space:nowrap;color:#1d2938;letter-spacing:0.22px;">00:38:12</span><span style="position:absolute;left:433.31px;top:382.69px;font-size:11px;line-height:11px;white-space:nowrap;color:#1d2938;letter-spacing:0.34px;">10</span><span style="position:absolute;left:459.31px;top:382.69px;font-size:11px;line-height:11px;white-space:nowrap;color:#1d2938;letter-spacing:0.06px;">16.01.2018 16:50</span><span style="position:absolute;left:622.30px;top:382.69px;font-size:11px;line-height:11px;white-space:nowrap;color:#1d2938;letter-spacing:0.06px;">16.01.2018 17:13</span><span style="position:absolute;left:784.50px;top:382.69px;font-size:11px;line-height:11px;white-space:nowrap;color:#1d2938;letter-spacing:0.22px;">Репинская улица, Коломна, Московская область, РФ</span><span style="position:absolute;left:1167.81px;top:382.69px;font-size:11px;line-height:11px;white-space:nowrap;color:#1d2938;letter-spacing:0.27px;">Амерево, Коломенский район, Московская область, РФ</span><span style="position:absolute;left:1623.81px;top:382.69px;font-size:11px;line-height:11px;white-space:nowrap;color:#1d2938;letter-spacing:0.32px;">14.4</span><span style="position:absolute;left:1747.71px;top:382.69px;font-size:11px;line-height:11px;white-space:nowrap;color:#1d2938;">0</span><span style="position:absolute;left:1846.21px;top:382.69px;font-size:11px;line-height:11px;white-space:nowrap;color:#1d2938;letter-spacing:0.22px;">00:23:28</span><span style="position:absolute;left:433.31px;top:406.69px;font-size:11px;line-height:11px;white-space:nowrap;color:#1d2938;letter-spacing:0.55px;transform:scaleX(1.0563);transform-origin:0 0;">11</span><span style="position:absolute;left:459.31px;top:406.69px;font-size:11px;line-height:11px;white-space:nowrap;color:#1d2938;letter-spacing:0.06px;">16.01.2018 17:19</span><span style="position:absolute;left:622.30px;top:406.69px;font-size:11px;line-height:11px;white-space:nowrap;color:#1d2938;letter-spacing:0.06px;">16.01.2018 17:23</span><span style="position:absolute;left:784.50px;top:406.69px;font-size:11px;line-height:11px;white-space:nowrap;color:#1d2938;letter-spacing:0.27px;">Амерево, Коломенский район, Московская область, РФ</span><span style="position:absolute;left:1167.81px;top:406.69px;font-size:11px;line-height:11px;white-space:nowrap;color:#1d2938;letter-spacing:0.19px;">«Урал», сельское поселение Пестриковское, Московская область, РФ</span><span style="position:absolute;left:1639.81px;top:406.69px;font-size:11px;line-height:11px;white-space:nowrap;color:#1d2938;">1</span><span style="position:absolute;left:1747.71px;top:406.69px;font-size:11px;line-height:11px;white-space:nowrap;color:#1d2938;">0</span><span style="position:absolute;left:1846.21px;top:406.69px;font-size:11px;line-height:11px;white-space:nowrap;color:#1d2938;letter-spacing:0.22px;">00:04:41</span><span style="position:absolute;left:446.45px;top:456.67px;font-size:12.2px;line-height:12.2px;white-space:nowrap;color:#2a3442;letter-spacing:-0.20px;">Показаны записи</span><span style="position:absolute;left:545.45px;top:456.67px;font-size:12.2px;line-height:12.2px;white-space:nowrap;color:#2a3442;font-weight:700;letter-spacing:0.29px;">1-11</span><span style="position:absolute;left:573.95px;top:456.67px;font-size:12.2px;line-height:12.2px;white-space:nowrap;color:#2a3442;letter-spacing:0.19px;">из</span><span style="position:absolute;left:590.20px;top:456.67px;font-size:12.2px;line-height:12.2px;white-space:nowrap;color:#2a3442;font-weight:700;letter-spacing:0.45px;">25.</span><svg class="abs" style="left:751px;top:468px" width="125" height="15" viewBox="0 0 125 15"><g fill="none" stroke="#1f3f68" stroke-width="1.9"><path d="M7.4 1 L2 7.3 L7.4 13.6 M14.4 1 L9 7.3 L14.4 13.6"/><path d="M28.6 1 L23 7.3 L28.6 13.6"/><path d="M95 1 L100.4 7.3 L95 13.6"/><path d="M110.6 1 L116 7.3 L110.6 13.6 M117.6 1 L123 7.3 L117.6 13.6"/></g></svg>
<span style="position:absolute;left:799.86px;top:469.84px;font-size:12px;line-height:12px;white-space:nowrap;color:#3a4a62;">1</span><div class="abs" style="left:789px;top:484px;width:28px;height:1px;background:#7c92b4;"></div>
<span style="position:absolute;left:820.96px;top:469.84px;font-size:12px;line-height:12px;white-space:nowrap;color:#3a4a62;letter-spacing:0.60px;transform:scaleX(1.0584);transform-origin:0 0;">/ 3</span><div class="abs" style="left:427px;top:488.8px;width:1459px;height:11.8px;background:#f4f4f4;"></div>
<div class="abs" style="left:430.8px;top:491.2px;width:769.4px;height:7.6px;background:#c6c6c6;border-radius:3.8px;"></div>
<div class="abs" style="left:400px;top:504.9px;width:1520px;height:33.9px;background:#143054;"></div>
<div class="abs" style="left:400px;top:504.9px;width:27px;height:33.9px;background:#1a3b62;"></div>
<span style="position:absolute;left:440.18px;top:517.63px;font-size:12.6px;line-height:12.6px;white-space:nowrap;color:#fff;font-weight:700;letter-spacing:0.63px;transform:scaleX(1.0196);transform-origin:0 0;">ГРАФИК</span><svg class="abs" style="left:1835px;top:514px" width="11" height="18" viewBox="0 0 11 18"><path d="M5.5 1.2 V16.8 M2.2 4.4 L5.5 1 L8.8 4.4 M2.2 13.6 L5.5 17 L8.8 13.6" fill="none" stroke="#fff" stroke-width="1.15" stroke-linecap="round" stroke-linejoin="round"/></svg>
<svg class="abs" style="left:1856px;top:513px" width="19" height="19" viewBox="0 0 19 19"><g fill="none" stroke="#fff" stroke-width="1.15"><circle cx="9.5" cy="9.5" r="8.3"/><path d="M6.2 6.2 L12.8 12.8 M12.8 6.2 L6.2 12.8" stroke-linecap="round"/></g></svg>
<!-- sidebar -->
<div class="abs" style="left:1886px;top:70px;width:34px;height:431.5px;background:#1f4a72;"></div>
<div class="abs" style="left:1886px;top:70px;width:34px;height:34.6px;background:#4aa8ec;"></div>
<svg class="abs" style="left:1894px;top:80px" width="20" height="20" viewBox="0 0 20 20"><g fill="none" stroke="#fff" stroke-width="1.2"><circle cx="7.3" cy="7.5" r="5.4"/><path d="M11.2 11.4 L17.4 17.4" stroke-linecap="round"/></g></svg>
<div class="abs" style="left:1886px;top:140.4px;width:34px;height:1.4px;background:#173a5e;"></div>
<div class="abs" style="left:1886px;top:176.4px;width:34px;height:1.4px;background:#173a5e;"></div>
<div class="abs" style="left:1886px;top:212.4px;width:34px;height:1.4px;background:#173a5e;"></div>
<div class="abs" style="left:1886px;top:248.5px;width:34px;height:1.4px;background:#173a5e;"></div>
<div class="abs" style="left:1886px;top:284.6px;width:34px;height:1.4px;background:#173a5e;"></div>
<div class="abs" style="left:1886px;top:320.6px;width:34px;height:1.4px;background:#173a5e;"></div>
<div class="abs" style="left:1886px;top:356.6px;width:34px;height:1.4px;background:#173a5e;"></div>
<div class="abs" style="left:1886px;top:392.7px;width:34px;height:1.4px;background:#173a5e;"></div>
<div class="abs" style="left:1886px;top:428.8px;width:34px;height:1.4px;background:#173a5e;"></div>
<div class="abs" style="left:1886px;top:464.8px;width:34px;height:1.4px;background:#173a5e;"></div>
<svg class="abs" style="left:1895.8px;top:117.2px" width="15" height="16" viewBox="0 0 15 16"><g fill="none" stroke="#fff" stroke-width="1.2" stroke-linecap="round" stroke-linejoin="round"><path d="M.8 2.6 H14.2 M.8 8 H14.2 M.8 13.4 H14.2" stroke-width="1.5" stroke-linecap="butt"/></g></svg>
<svg class="abs" style="left:1895.3px;top:153.5px" width="16" height="16" viewBox="0 0 16 16"><g fill="none" stroke="#fff" stroke-width="1.2" stroke-linecap="round" stroke-linejoin="round"><path d="M8 1.2 H.8 V14.8 H14.4 V7.6"/><path d="M15 .8 L6.4 9.4 M6.4 4.8 V9.4 H11"/></g></svg>
<svg class="abs" style="left:1895.3px;top:188.7px" width="16" height="18" viewBox="0 0 16 18"><g fill="none" stroke="#fff" stroke-width="1.2" stroke-linecap="round" stroke-linejoin="round"><path d="M2 1.6 A8.6 8.6 0 0 0 14.4 13.8 Z"/><path d="M8.2 7.7 L12.6 2.9"/><circle cx="13.2" cy="2.3" r="1.15" fill="#fff" stroke="none"/></g></svg>
<svg class="abs" style="left:1894.8px;top:225.0px" width="17" height="17" viewBox="0 0 17 17"><g fill="none" stroke="#fff" stroke-width="1.2" stroke-linecap="round" stroke-linejoin="round"><circle cx="8.5" cy="8.5" r="7.7"/><path d="M6.2 6.6 A2.4 2.4 0 1 1 8.6 9.2 V10.6" stroke-width="1.4"/><circle cx="8.6" cy="12.8" r=".9" fill="#fff" stroke="none"/></g></svg>
<svg class="abs" style="left:1896.8px;top:261.4px" width="13" height="16" viewBox="0 0 13 16"><g fill="none" stroke="#fff" stroke-width="1.2" stroke-linecap="round" stroke-linejoin="round"><path d="M.8 .8 H7.6 L11.6 4.8 V15.2 H.8 Z"/><path d="M7.4 1 V5 H11.4" stroke-width="1"/><path d="M3.4 8.6 H9 M3.4 11.6 H9"/></g></svg>
<svg class="abs" style="left:1895.3px;top:298.4px" width="16" height="14" viewBox="0 0 16 14"><g fill="none" stroke="#fff" stroke-width="1.2" stroke-linecap="round" stroke-linejoin="round"><path d="M.8 .8 H14.6 V10.2 H12.4 L12.8 13.4 L9 10.2 H.8 Z"/><path d="M3.4 4 H12 M3.4 7 H12"/></g></svg>
<svg class="abs" style="left:1895.3px;top:333.8px" width="16" height="15" viewBox="0 0 16 15"><g fill="none" stroke="#fff" stroke-width="1.4" stroke-linecap="round" stroke-linejoin="round"><path d="M2.4 .8 V13.6 M7.6 .8 V13.6 M12.8 .8 V13.6" /><path d="M.4 4.6 H4.4 M5.6 9.6 H9.6 M10.8 4.6 H14.8" stroke-width="1.5" stroke-linecap="butt"/></g></svg>
<svg class="abs" style="left:1894.8px;top:404.5px" width="17" height="19" viewBox="0 0 17 19"><g fill="none" stroke="#fff" stroke-width="1.2" stroke-linecap="round" stroke-linejoin="round"><circle cx="8.4" cy="7.2" r="4.8"/><path d="M3 2 A7.6 7.6 0 1 0 14.4 2.6"/><path d="M8.6 14.8 V17.4 M5.4 17.6 H11.8"/></g></svg>
<svg class="abs" style="left:1896.8px;top:441.1px" width="13" height="17" viewBox="0 0 13 17"><g fill="none" stroke="#fff" stroke-width="1.2" stroke-linecap="round" stroke-linejoin="round"><path d="M6.5 .8 C4.6 4 .8 7.6 .8 10.8 A5.7 5.4 0 0 0 12.2 10.8 C12.2 7.6 8.4 4 6.5 .8 Z"/><path d="M4 8.6 Q3.2 11 4.6 12.6" stroke-width="1"/></g></svg>
<svg class="abs" style="left:1895.3px;top:479.2px" width="16" height="13" viewBox="0 0 16 13"><g fill="none" stroke="#fff" stroke-width="1.2" stroke-linecap="round" stroke-linejoin="round"><path d="M5 1.6 H14.6 M5 6.6 H14.6 M5 11.6 H14.6"/><circle cx="1.4" cy="1.6" r="1.1" fill="#fff" stroke="none"/><circle cx="1.4" cy="6.6" r="1.1" fill="#fff" stroke="none"/><circle cx="1.4" cy="11.6" r="1.1" fill="#fff" stroke="none"/></g></svg>
<span style="position:absolute;left:1894.86px;top:370.04px;font-size:12px;line-height:12px;white-space:nowrap;color:#fff;letter-spacing:-0.60px;transform:scaleX(0.9704);transform-origin:0 0;">RU</span><!-- footer -->
<div class="abs" style="left:0px;top:923.9px;width:1920px;height:18.1px;background:#1f4a72;border-top:1.1px solid #183d68;"></div>
<svg class="abs" style="left:0;top:936px" width="1920" height="6" viewBox="0 0 1920 6"><path d="M0 6 V1.4 Q.8 5.2 4.8 6 Z M1920 6 V1.4 Q1919.2 5.2 1915.2 6 Z" fill="#05080c"/></svg>
<span style="position:absolute;left:898.00px;top:927.72px;font-size:11.2px;line-height:11.2px;white-space:nowrap;color:#fff;font-weight:700;letter-spacing:-0.23px;">Copyright © 2018 Gelios</span>
</body>
</html>
